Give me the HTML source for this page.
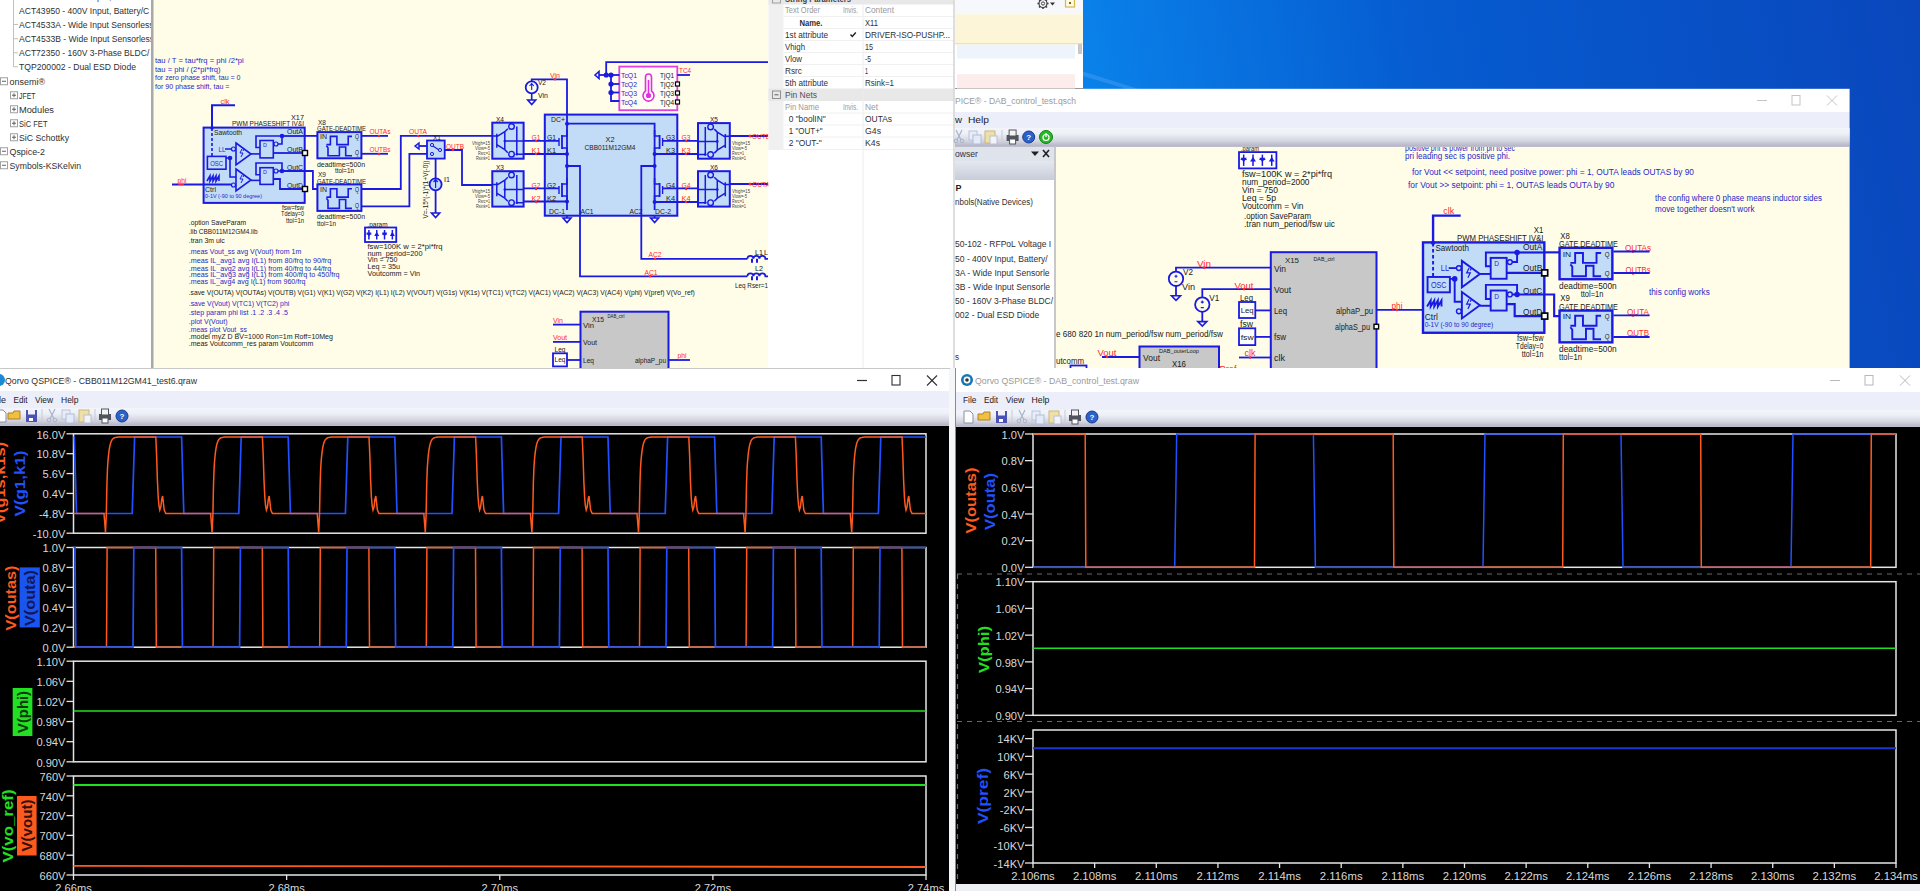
<!DOCTYPE html>
<html><head><meta charset="utf-8"><style>
html,body{margin:0;padding:0;background:#000;overflow:hidden;width:1920px;height:891px}
svg{display:block;font-family:"Liberation Sans", sans-serif}
</style></head><body>
<svg width="1920" height="891" viewBox="0 0 1920 891">
<defs>
<linearGradient id="desk" gradientUnits="userSpaceOnUse" x1="1083" y1="90" x2="1920" y2="-60">
<stop offset="0" stop-color="#0a82ea"/><stop offset="0.4" stop-color="#065cd0"/><stop offset="1" stop-color="#0a46bc"/></linearGradient>
<linearGradient id="tb" x1="0" y1="0" x2="0" y2="1">
<stop offset="0" stop-color="#f3f5fb"/><stop offset="0.3" stop-color="#eef0f8"/><stop offset="0.7" stop-color="#d2d3de"/><stop offset="0.92" stop-color="#b8b8ca"/><stop offset="1" stop-color="#c0c0cc"/></linearGradient>
<linearGradient id="mb" x1="0" y1="0" x2="0" y2="1">
<stop offset="0" stop-color="#eceef9"/><stop offset="1" stop-color="#eceef9"/></linearGradient>
<linearGradient id="brh" x1="0" y1="0" x2="0" y2="1">
<stop offset="0" stop-color="#e4e8f0"/><stop offset="1" stop-color="#c8ccd8"/></linearGradient>
</defs>
<rect x="0" y="0" width="1920" height="891" fill="#000"/>
<rect x="1083" y="0" width="837" height="370" fill="url(#desk)"/>
<path d="M1083,71.5 L1138,88.8 L1126,88.8 L1083,76 z" fill="#3c98ec" opacity="0.6"/>
<rect x="0" y="0" width="955" height="369" fill="#ffffff"/>
<rect x="153" y="0" width="615" height="368" fill="#fffde8"/>
<rect x="151" y="0" width="2.5" height="369" fill="#a8a8a8"/>
<line x1="0" y1="368.5" x2="955" y2="368.5" stroke="#b0b0b0" stroke-width="1"/>
<line x1="13.5" y1="0" x2="13.5" y2="67" stroke="#c0c0c0" stroke-width="1"/>
<line x1="14" y1="24.5" x2="18" y2="24.5" stroke="#c0c0c0" stroke-width="1"/>
<line x1="14" y1="38.75" x2="18" y2="38.75" stroke="#c0c0c0" stroke-width="1"/>
<line x1="14" y1="52.75" x2="18" y2="52.75" stroke="#c0c0c0" stroke-width="1"/>
<line x1="14" y1="66.75" x2="18" y2="66.75" stroke="#c0c0c0" stroke-width="1"/>
<clipPath id="treeclip"><rect x="0" y="0" width="151" height="368"/></clipPath><g clip-path="url(#treeclip)">
<text x="19" y="-0.2" font-size="9.2" fill="#303030" textLength="163.6" lengthAdjust="spacingAndGlyphs">ACT43740 - 160V Input, 3-Phase Charging</text>
<text x="19" y="13.8" font-size="9.2" fill="#303030" textLength="130.3" lengthAdjust="spacingAndGlyphs">ACT43950 - 400V Input, Battery/C</text>
<text x="19" y="27.8" font-size="9.2" fill="#303030" textLength="134.6" lengthAdjust="spacingAndGlyphs">ACT4533A - Wide Input Sensorless</text>
<text x="19" y="42.1" font-size="9.2" fill="#303030" textLength="135.1" lengthAdjust="spacingAndGlyphs">ACT4533B - Wide Input Sensorless</text>
<text x="19" y="56.1" font-size="9.2" fill="#303030" textLength="130.3" lengthAdjust="spacingAndGlyphs">ACT72350 - 160V 3-Phase BLDC/</text>
<text x="19" y="70.1" font-size="9.2" fill="#303030" textLength="117.0" lengthAdjust="spacingAndGlyphs">TQP200002 - Dual ESD Diode</text>
<text x="9.5" y="84.6" font-size="9.2" fill="#303030" textLength="35.5" lengthAdjust="spacingAndGlyphs">onsemi®</text>
<text x="19" y="98.6" font-size="9.2" fill="#303030" textLength="16.5" lengthAdjust="spacingAndGlyphs">JFET</text>
<text x="19" y="112.6" font-size="9.2" fill="#303030" textLength="35.0" lengthAdjust="spacingAndGlyphs">Modules</text>
<text x="19" y="126.6" font-size="9.2" fill="#303030" textLength="28.5" lengthAdjust="spacingAndGlyphs">SiC FET</text>
<text x="19" y="140.6" font-size="9.2" fill="#303030" textLength="50.0" lengthAdjust="spacingAndGlyphs">SiC Schottky</text>
<text x="9.5" y="154.6" font-size="9.2" fill="#303030" textLength="35.5" lengthAdjust="spacingAndGlyphs">Qspice-2</text>
<text x="9.5" y="168.6" font-size="9.2" fill="#303030" textLength="71.5" lengthAdjust="spacingAndGlyphs">Symbols-KSKelvin</text>
</g>
<rect x="0.5" y="77.75" width="7" height="7" fill="none" stroke="#a0a0a0" stroke-width="1"/>
<line x1="2" y1="81.25" x2="6" y2="81.25" stroke="#606060" stroke-width="1"/>
<rect x="0.5" y="147.75" width="7" height="7" fill="none" stroke="#a0a0a0" stroke-width="1"/>
<line x1="2" y1="151.25" x2="6" y2="151.25" stroke="#606060" stroke-width="1"/>
<rect x="0.5" y="161.75" width="7" height="7" fill="none" stroke="#a0a0a0" stroke-width="1"/>
<line x1="2" y1="165.25" x2="6" y2="165.25" stroke="#606060" stroke-width="1"/>
<rect x="10.5" y="91.75" width="7" height="7" fill="none" stroke="#a0a0a0" stroke-width="1"/>
<line x1="12" y1="95.25" x2="16" y2="95.25" stroke="#606060" stroke-width="1"/>
<line x1="14" y1="93.25" x2="14" y2="97.25" stroke="#606060" stroke-width="1"/>
<rect x="10.5" y="105.75" width="7" height="7" fill="none" stroke="#a0a0a0" stroke-width="1"/>
<line x1="12" y1="109.25" x2="16" y2="109.25" stroke="#606060" stroke-width="1"/>
<line x1="14" y1="107.25" x2="14" y2="111.25" stroke="#606060" stroke-width="1"/>
<rect x="10.5" y="119.75" width="7" height="7" fill="none" stroke="#a0a0a0" stroke-width="1"/>
<line x1="12" y1="123.25" x2="16" y2="123.25" stroke="#606060" stroke-width="1"/>
<line x1="14" y1="121.25" x2="14" y2="125.25" stroke="#606060" stroke-width="1"/>
<rect x="10.5" y="133.75" width="7" height="7" fill="none" stroke="#a0a0a0" stroke-width="1"/>
<line x1="12" y1="137.25" x2="16" y2="137.25" stroke="#606060" stroke-width="1"/>
<line x1="14" y1="135.25" x2="14" y2="139.25" stroke="#606060" stroke-width="1"/>
<text x="155" y="62.9" font-size="8" fill="#2828c8" textLength="88.8" lengthAdjust="spacingAndGlyphs">tau / T = tau*frq = phi /2*pi</text>
<text x="155" y="71.6" font-size="8" fill="#2828c8" textLength="65.5" lengthAdjust="spacingAndGlyphs">tau = phi / (2*pi*frq)</text>
<text x="155" y="80.4" font-size="8" fill="#2828c8" textLength="85.5" lengthAdjust="spacingAndGlyphs">for zero phase shift, tau = 0</text>
<text x="155" y="89.1" font-size="8" fill="#2828c8" textLength="74.5" lengthAdjust="spacingAndGlyphs">for 90 phase shift, tau =</text>
<text x="188.75" y="225.4" font-size="8" fill="#202020" textLength="57.5" lengthAdjust="spacingAndGlyphs">.option SaveParam</text>
<text x="188.75" y="234.1" font-size="8" fill="#202020" textLength="68.8" lengthAdjust="spacingAndGlyphs">.lib CBB011M12GM4.lib</text>
<text x="188.75" y="242.9" font-size="8" fill="#202020" textLength="36.0" lengthAdjust="spacingAndGlyphs">.tran 3m uic</text>
<text x="188.75" y="253.6" font-size="8" fill="#2828c8" textLength="112.5" lengthAdjust="spacingAndGlyphs">.meas Vout_ss avg V(Vout) from 1m</text>
<text x="188.75" y="262.9" font-size="8" fill="#2828c8" textLength="142.5" lengthAdjust="spacingAndGlyphs">.meas IL_avg1 avg I(L1) from 80/frq to 90/frq</text>
<text x="188.75" y="270.9" font-size="8" fill="#2828c8" textLength="142.5" lengthAdjust="spacingAndGlyphs">.meas IL_avg2 avg I(L1) from 40/frq to 44/frq</text>
<text x="188.75" y="277.4" font-size="8" fill="#2828c8" textLength="150.8" lengthAdjust="spacingAndGlyphs">.meas IL_avg3 avg I(L1) from 400/frq to 450/frq</text>
<text x="188.75" y="284.1" font-size="8" fill="#2828c8" textLength="116.8" lengthAdjust="spacingAndGlyphs">.meas IL_avg4 avg I(L1) from 960/frq</text>
<text x="188.75" y="295.4" font-size="8" fill="#202020" textLength="506.0" lengthAdjust="spacingAndGlyphs">.save V(OUTA) V(OUTAs) V(OUTB) V(G1) V(K1) V(G2) V(K2) I(L1) I(L2) V(VOUT) V(G1s) V(K1s) V(TC1) V(TC2) V(AC1) V(AC2) V(AC3) V(AC4) V(phi) V(pref) V(Vo_ref)</text>
<text x="188.75" y="306.1" font-size="8" fill="#2828c8" textLength="100.5" lengthAdjust="spacingAndGlyphs">.save V(Vout) V(TC1) V(TC2) phi</text>
<text x="188.75" y="314.9" font-size="8" fill="#2828c8" textLength="99.2" lengthAdjust="spacingAndGlyphs">.step param phi list .1 .2 .3 .4 .5</text>
<text x="188.75" y="323.6" font-size="8" fill="#2828c8" textLength="38.8" lengthAdjust="spacingAndGlyphs">.plot V(Vout)</text>
<text x="188.75" y="332.4" font-size="8" fill="#2828c8" textLength="58.2" lengthAdjust="spacingAndGlyphs">.meas plot Vout_ss</text>
<text x="188.75" y="339.1" font-size="8" fill="#202020" textLength="144.2" lengthAdjust="spacingAndGlyphs">.model myZ D BV=1000 Ron=1m Roff=10Meg</text>
<text x="188.75" y="345.9" font-size="8" fill="#202020" textLength="124.5" lengthAdjust="spacingAndGlyphs">.meas Voutcomm_res param Voutcomm</text>
<text x="367.5" y="227.4" font-size="8" fill="#202020" textLength="20.0" lengthAdjust="spacingAndGlyphs">.param</text>
<rect x="365" y="227.5" width="31.25" height="14.5" fill="#fff" stroke="#1a1ae0" stroke-width="1.8"/>
<line x1="368.90625" y1="230.0" x2="368.90625" y2="239.5" stroke="#1a1ae0" stroke-width="1.5"/>
<path d="M366.40625,232.43 L371.40625,232.43 L368.90625,236.49 z" fill="#1a1ae0"/>
<line x1="366.40625" y1="234.025" x2="371.40625" y2="234.025" stroke="#1a1ae0" stroke-width="1.3"/>
<line x1="376.71875" y1="230.0" x2="376.71875" y2="239.5" stroke="#1a1ae0" stroke-width="1.5"/>
<path d="M374.21875,235.91 L379.21875,235.91 L376.71875,231.85 z" fill="#1a1ae0"/>
<line x1="384.53125" y1="230.0" x2="384.53125" y2="239.5" stroke="#1a1ae0" stroke-width="1.5"/>
<path d="M382.03125,232.43 L387.03125,232.43 L384.53125,236.49 z" fill="#1a1ae0"/>
<line x1="382.03125" y1="234.025" x2="387.03125" y2="234.025" stroke="#1a1ae0" stroke-width="1.3"/>
<line x1="392.34375" y1="230.0" x2="392.34375" y2="239.5" stroke="#1a1ae0" stroke-width="1.5"/>
<path d="M389.84375,235.91 L394.84375,235.91 L392.34375,231.85 z" fill="#1a1ae0"/>
<text x="367.5" y="249.1" font-size="8" fill="#202020" textLength="75.0" lengthAdjust="spacingAndGlyphs">fsw=100K  w = 2*pi*frq</text>
<text x="367.5" y="255.9" font-size="8" fill="#202020" textLength="55.0" lengthAdjust="spacingAndGlyphs">num_period=200</text>
<text x="367.5" y="262.4" font-size="8" fill="#202020" textLength="30.0" lengthAdjust="spacingAndGlyphs">Vin = 750</text>
<text x="367.5" y="269.1" font-size="8" fill="#202020" textLength="32.5" lengthAdjust="spacingAndGlyphs">Leq = 35u</text>
<text x="367.5" y="275.9" font-size="8" fill="#202020" textLength="52.5" lengthAdjust="spacingAndGlyphs">Voutcomm = Vin</text>
<rect x="203.6" y="127.6" width="101.1" height="75.30000000000001" fill="#c2dcf8" stroke="#1a1ae0" stroke-width="2"/>
<polyline points="212.0,127.6 212.0,105.3 235.0,105.3" fill="none" stroke="#1a1ae0" stroke-width="2"/>
<line x1="212" y1="128" x2="212" y2="156" stroke="#1a1ae0" stroke-width="1.6" stroke-dasharray="3,2"/>
<circle cx="212" cy="128" r="1.8" fill="#1a1ae0"/>
<rect x="207.4" y="156.4" width="18.6" height="12.8" fill="none" stroke="#1a1ae0" stroke-width="1.6"/>
<text x="216.7" y="165.5" font-size="7" fill="#2828c8" text-anchor="middle" textLength="13.0" lengthAdjust="spacingAndGlyphs">OSC</text>
<path d="M207,181 l3,-5 v5 l3,-5 v5 l3,-5 v5 l3,-5 v5" fill="none" stroke="#1a1ae0" stroke-width="1.6"/>
<circle cx="230" cy="158" r="2.3" fill="#1a1ae0"/>
<polyline points="226.0,158.0 230.0,158.0 230.0,177.0 236.0,177.0" fill="none" stroke="#1a1ae0" stroke-width="1.6"/>
<path d="M236,143 L251,154 L236,165 z" fill="#c2dcf8" stroke="#1a1ae0" stroke-width="1.6"/>
<path d="M242,149 l-2,4 h3 l-2,4 M244,149 l-1,2" fill="none" stroke="#1a1ae0" stroke-width="1"/>
<path d="M236,169 L251,180 L236,191 z" fill="#c2dcf8" stroke="#1a1ae0" stroke-width="1.6"/>
<path d="M242,175 l-2,4 h3 l-2,4 M244,175 l-1,2" fill="none" stroke="#1a1ae0" stroke-width="1"/>
<circle cx="233.5" cy="149" r="2" fill="#c2dcf8" stroke="#1a1ae0" stroke-width="1.2"/>
<circle cx="233.5" cy="185" r="2" fill="#c2dcf8" stroke="#1a1ae0" stroke-width="1.2"/>
<line x1="225" y1="149" x2="231.5" y2="149" stroke="#1a1ae0" stroke-width="1.5"/>
<text x="222" y="151.5" font-size="7" fill="#2828c8" text-anchor="middle" textLength="7.0" lengthAdjust="spacingAndGlyphs">LL</text>
<text x="225" y="103.7" font-size="7.5" fill="#ff2a2a" text-anchor="middle" textLength="9.0" lengthAdjust="spacingAndGlyphs">clk</text>
<rect x="260" y="140.5" width="13.3" height="17.400000000000006" fill="#c2dcf8" stroke="#1a1ae0" stroke-width="1.6"/>
<text x="263" y="147.2" font-size="6" fill="#2828c8" textLength="4.0" lengthAdjust="spacingAndGlyphs">D</text>
<circle cx="276" cy="144" r="2" fill="#c2dcf8" stroke="#1a1ae0" stroke-width="1.2"/>
<polyline points="260.0,147.5 256.0,147.5 256.0,136.0 282.0,136.0 282.0,144.0 278.0,144.0" fill="none" stroke="#1a1ae0" stroke-width="1.6"/>
<circle cx="282" cy="136" r="2.3" fill="#1a1ae0"/>
<line x1="251" y1="153.9" x2="260" y2="153.9" stroke="#1a1ae0" stroke-width="1.6"/>
<rect x="260" y="167.7" width="13.3" height="16.700000000000017" fill="#c2dcf8" stroke="#1a1ae0" stroke-width="1.6"/>
<text x="263" y="174.4" font-size="6" fill="#2828c8" textLength="4.0" lengthAdjust="spacingAndGlyphs">D</text>
<circle cx="276" cy="171" r="2" fill="#c2dcf8" stroke="#1a1ae0" stroke-width="1.2"/>
<polyline points="260.0,174.7 256.0,174.7 256.0,163.0 282.0,163.0 282.0,171.0 278.0,171.0" fill="none" stroke="#1a1ae0" stroke-width="1.6"/>
<circle cx="282" cy="171" r="2.3" fill="#1a1ae0"/>
<line x1="251" y1="180.4" x2="260" y2="180.4" stroke="#1a1ae0" stroke-width="1.6"/>
<line x1="282" y1="136" x2="304.7" y2="136" stroke="#1a1ae0" stroke-width="1.8"/>
<polyline points="273.3,153.0 304.7,153.0" fill="none" stroke="#1a1ae0" stroke-width="1.8"/>
<polyline points="282.0,171.0 312.9,171.0 312.9,189.0 317.4,189.0" fill="none" stroke="#1a1ae0" stroke-width="1.8"/>
<polyline points="273.3,179.0 280.0,179.0 280.0,189.0 304.7,189.0" fill="none" stroke="#1a1ae0" stroke-width="1.8"/>
<rect x="302.5" y="150.5" width="5" height="5" fill="#fff" stroke="#000" stroke-width="1.4"/>
<rect x="302.5" y="186.5" width="5" height="5" fill="#fff" stroke="#000" stroke-width="1.4"/>
<text x="304" y="119.7" font-size="7.5" fill="#202020" text-anchor="end" textLength="13.0" lengthAdjust="spacingAndGlyphs">X17</text>
<text x="304" y="126.2" font-size="7.5" fill="#202020" text-anchor="end" textLength="72.0" lengthAdjust="spacingAndGlyphs">PWM PHASESHIFT IV&amp;I</text>
<text x="214" y="134.7" font-size="7.5" fill="#202020" textLength="28.0" lengthAdjust="spacingAndGlyphs">Sawtooth</text>
<text x="303" y="134.2" font-size="7.5" fill="#202020" text-anchor="end" textLength="16.0" lengthAdjust="spacingAndGlyphs">OutA</text>
<text x="303" y="151.7" font-size="7.5" fill="#202020" text-anchor="end" textLength="16.0" lengthAdjust="spacingAndGlyphs">OutB</text>
<text x="303" y="170.2" font-size="7.5" fill="#202020" text-anchor="end" textLength="16.0" lengthAdjust="spacingAndGlyphs">OutC</text>
<text x="303" y="187.7" font-size="7.5" fill="#202020" text-anchor="end" textLength="16.0" lengthAdjust="spacingAndGlyphs">OutD</text>
<text x="205" y="192.2" font-size="7.5" fill="#202020" textLength="11.0" lengthAdjust="spacingAndGlyphs">Ctrl</text>
<text x="205" y="198.2" font-size="6" fill="#2828c8" textLength="57.0" lengthAdjust="spacingAndGlyphs">0-1V (-90 to 90 degree)</text>
<text x="304" y="209.7" font-size="7.5" fill="#202020" text-anchor="end" textLength="22.0" lengthAdjust="spacingAndGlyphs">fsw=fsw</text>
<text x="304" y="216.2" font-size="7.5" fill="#202020" text-anchor="end" textLength="23.0" lengthAdjust="spacingAndGlyphs">Tdelay=0</text>
<text x="304" y="222.7" font-size="7.5" fill="#202020" text-anchor="end" textLength="18.0" lengthAdjust="spacingAndGlyphs">ttol=1n</text>
<rect x="317.4" y="132.1" width="44.0" height="26.200000000000017" fill="#c2dcf8" stroke="#1a1ae0" stroke-width="2"/>
<g transform="translate(317.4 132.1) scale(1.0 0.9961977186311793) translate(-317.4 -132.1)"><path d="M326.4,144.7 h4 v-8.3 h6.5 v8.3 h11.3 v-8.3 h3.8" fill="none" stroke="#1a1ae0" stroke-width="1.6"/><path d="M326.4,145.9 l1.6,2 v8 h11.4 v-8.8 h6.3 v8.8 h6.3" fill="none" stroke="#1a1ae0" stroke-width="1.6"/></g>
<rect x="317.4" y="184.4" width="44.0" height="26.5" fill="#c2dcf8" stroke="#1a1ae0" stroke-width="2"/>
<g transform="translate(317.4 184.4) scale(1.0 1.0076045627376427) translate(-317.4 -184.4)"><path d="M326.4,197.0 h4 v-8.3 h6.5 v8.3 h11.3 v-8.3 h3.8" fill="none" stroke="#1a1ae0" stroke-width="1.6"/><path d="M326.4,198.20000000000002 l1.6,2 v8 h11.4 v-8.8 h6.3 v8.8 h6.3" fill="none" stroke="#1a1ae0" stroke-width="1.6"/></g>
<text x="318" y="124.7" font-size="7.5" fill="#202020" textLength="8.0" lengthAdjust="spacingAndGlyphs">X8</text>
<text x="318" y="176.7" font-size="7.5" fill="#202020" textLength="8.0" lengthAdjust="spacingAndGlyphs">X9</text>
<text x="317" y="131.2" font-size="7.5" fill="#202020" textLength="49.0" lengthAdjust="spacingAndGlyphs">GATE-DEADTIME</text>
<text x="317" y="183.7" font-size="7.5" fill="#202020" textLength="49.0" lengthAdjust="spacingAndGlyphs">GATE-DEADTIME</text>
<text x="320" y="139.4" font-size="6.5" fill="#202020" textLength="7.0" lengthAdjust="spacingAndGlyphs">IN</text>
<text x="359" y="139.4" font-size="6.5" fill="#202020" text-anchor="end" textLength="4.0" lengthAdjust="spacingAndGlyphs">Q</text>
<text x="359" y="155.4" font-size="6.5" fill="#202020" text-anchor="end" textLength="4.0" lengthAdjust="spacingAndGlyphs">Q</text>
<text x="320" y="191.7" font-size="6.5" fill="#202020" textLength="7.0" lengthAdjust="spacingAndGlyphs">IN</text>
<text x="359" y="191.7" font-size="6.5" fill="#202020" text-anchor="end" textLength="4.0" lengthAdjust="spacingAndGlyphs">Q</text>
<text x="359" y="207.7" font-size="6.5" fill="#202020" text-anchor="end" textLength="4.0" lengthAdjust="spacingAndGlyphs">Q</text>
<text x="317" y="166.7" font-size="7.5" fill="#202020" textLength="48.0" lengthAdjust="spacingAndGlyphs">deadtime=500n</text>
<text x="335" y="173.2" font-size="7.5" fill="#202020" textLength="19.0" lengthAdjust="spacingAndGlyphs">ttol=1n</text>
<text x="317" y="219.2" font-size="7.5" fill="#202020" textLength="48.0" lengthAdjust="spacingAndGlyphs">deadtime=500n</text>
<text x="317" y="225.7" font-size="7.5" fill="#202020" textLength="19.0" lengthAdjust="spacingAndGlyphs">ttol=1n</text>
<line x1="304.7" y1="135.9" x2="317.4" y2="135.9" stroke="#1a1ae0" stroke-width="1.8"/>
<line x1="172" y1="184.4" x2="231.5" y2="184.4" stroke="#1a1ae0" stroke-width="2"/>
<line x1="179" y1="184.4" x2="184" y2="184.4" stroke="#ff2a2a" stroke-width="1"/>
<text x="182" y="183.2" font-size="7.5" fill="#ff2a2a" text-anchor="middle" textLength="9.0" lengthAdjust="spacingAndGlyphs">phi</text>
<line x1="361.4" y1="135.9" x2="388" y2="135.9" stroke="#1a1ae0" stroke-width="1.8"/>
<line x1="361.4" y1="153.8" x2="388" y2="153.8" stroke="#1a1ae0" stroke-width="1.8"/>
<text x="380" y="134.2" font-size="7.5" fill="#ff2a2a" text-anchor="middle" textLength="21.0" lengthAdjust="spacingAndGlyphs">OUTAs</text>
<text x="380" y="152.2" font-size="7.5" fill="#ff2a2a" text-anchor="middle" textLength="21.0" lengthAdjust="spacingAndGlyphs">OUTBs</text>
<circle cx="379" cy="136" r="1.2" fill="#ff2a2a"/>
<circle cx="379" cy="154" r="1.2" fill="#ff2a2a"/>
<polyline points="361.4,189.0 400.8,189.0 400.8,135.9 492.3,135.9" fill="none" stroke="#1a1ae0" stroke-width="1.8"/>
<polyline points="361.4,206.4 409.4,206.4 409.4,153.8 427.0,153.8" fill="none" stroke="#1a1ae0" stroke-width="1.8"/>
<text x="418" y="134.2" font-size="7.5" fill="#ff2a2a" text-anchor="middle" textLength="18.0" lengthAdjust="spacingAndGlyphs">OUTA</text>
<circle cx="418" cy="136" r="1.2" fill="#ff2a2a"/>
<rect x="427" y="140.5" width="17.7" height="18.1" fill="#c2dcf8" stroke="#1a1ae0" stroke-width="1.8"/>
<circle cx="432" cy="145" r="1.6" fill="none" stroke="#1a1ae0" stroke-width="1"/>
<circle cx="432" cy="154" r="1.6" fill="none" stroke="#1a1ae0" stroke-width="1"/>
<circle cx="440" cy="150" r="1.6" fill="none" stroke="#1a1ae0" stroke-width="1"/>
<line x1="433" y1="146" x2="439" y2="150" stroke="#1a1ae0" stroke-width="1.2"/>
<text x="437" y="139.5" font-size="7" fill="#202020" text-anchor="middle" textLength="8.0" lengthAdjust="spacingAndGlyphs">X1</text>
<path d="M415,146 l4,-3 v6 z" fill="#c2dcf8" stroke="#1a1ae0" stroke-width="1.4"/>
<line x1="419" y1="146" x2="427" y2="146" stroke="#1a1ae0" stroke-width="1.8"/>
<polyline points="444.7,150.0 462.0,150.0 462.0,185.0 492.3,185.0" fill="none" stroke="#1a1ae0" stroke-width="1.8"/>
<text x="455" y="148.7" font-size="7.5" fill="#ff2a2a" text-anchor="middle" textLength="18.0" lengthAdjust="spacingAndGlyphs">OUTB</text>
<circle cx="453" cy="150" r="1.2" fill="#ff2a2a"/>
<line x1="435.6" y1="158.6" x2="435.6" y2="213" stroke="#1a1ae0" stroke-width="1.8"/>
<circle cx="435.6" cy="184.4" r="6" fill="#c2dcf8" stroke="#1a1ae0" stroke-width="1.8"/>
<path d="M435.6,180 v8 M433.5,182 l2.1,-2.5 l2.1,2.5" fill="none" stroke="#1a1ae0" stroke-width="1.2"/>
<path d="M431.5,213 h8.2 l-4.1,4.5 z" fill="none" stroke="#1a1ae0" stroke-width="1.6"/>
<text x="444" y="181.5" font-size="7" fill="#202020" textLength="6.0" lengthAdjust="spacingAndGlyphs">I1</text>
<text x="425" y="192.0" font-size="7" fill="#202020" text-anchor="middle" transform="rotate(-90 425 189.5)" textLength="58.0" lengthAdjust="spacingAndGlyphs">V=-15*(-1)*(1+V(-0))</text>
<rect x="492.3" y="122.7" width="31.30000000000001" height="35.999999999999986" fill="#c2dcf8" stroke="#1a1ae0" stroke-width="2"/>
<g>
<path d="M492.3,135.9 h4.5 M496.8,133.7 v14 M496.8,136.7 l8,-5 l3,-3 M496.8,144.7 l8,5 l3,3 M504.8,131.7 v18 M504.8,141.0 h18.8 M516.8,126.5 v27.7 M516.8,154.2 h6.8" fill="none" stroke="#1a1ae0" stroke-width="1.5"/>
<circle cx="511.5" cy="126.5" r="2.8" fill="#c2dcf8" stroke="#1a1ae0" stroke-width="1.4"/>
<circle cx="511.5" cy="154.2" r="2.8" fill="#c2dcf8" stroke="#1a1ae0" stroke-width="1.4"/>
<circle cx="504.8" cy="141.0" r="1.3" fill="#1a1ae0"/>
<circle cx="516.8" cy="154.2" r="1.3" fill="#1a1ae0"/>
</g>
<rect x="492.3" y="171.2" width="31.30000000000001" height="35.400000000000006" fill="#c2dcf8" stroke="#1a1ae0" stroke-width="2"/>
<g>
<path d="M492.3,184.39999999999998 h4.5 M496.8,182.2 v14 M496.8,185.2 l8,-5 l3,-3 M496.8,193.2 l8,5 l3,3 M504.8,180.2 v18 M504.8,189.5 h18.8 M516.8,175.0 v27.7 M516.8,202.7 h6.8" fill="none" stroke="#1a1ae0" stroke-width="1.5"/>
<circle cx="511.5" cy="175.0" r="2.8" fill="#c2dcf8" stroke="#1a1ae0" stroke-width="1.4"/>
<circle cx="511.5" cy="202.7" r="2.8" fill="#c2dcf8" stroke="#1a1ae0" stroke-width="1.4"/>
<circle cx="504.8" cy="189.5" r="1.3" fill="#1a1ae0"/>
<circle cx="516.8" cy="202.7" r="1.3" fill="#1a1ae0"/>
</g>
<rect x="698" y="123.1" width="31.799999999999955" height="35.599999999999994" fill="#c2dcf8" stroke="#1a1ae0" stroke-width="2"/>
<g transform="translate(1427.8 0) scale(-1 1)">
<path d="M698,136.29999999999998 h4.5 M702.5,134.1 v14 M702.5,137.1 l8,-5 l3,-3 M702.5,145.1 l8,5 l3,3 M710.5,132.1 v18 M710.5,141.4 h18.8 M722.5,126.89999999999999 v27.7 M722.5,154.6 h6.8" fill="none" stroke="#1a1ae0" stroke-width="1.5"/>
<circle cx="717.2" cy="126.89999999999999" r="2.8" fill="#c2dcf8" stroke="#1a1ae0" stroke-width="1.4"/>
<circle cx="717.2" cy="154.6" r="2.8" fill="#c2dcf8" stroke="#1a1ae0" stroke-width="1.4"/>
<circle cx="710.5" cy="141.4" r="1.3" fill="#1a1ae0"/>
<circle cx="722.5" cy="154.6" r="1.3" fill="#1a1ae0"/>
</g>
<rect x="698" y="171.2" width="31.799999999999955" height="35.400000000000006" fill="#c2dcf8" stroke="#1a1ae0" stroke-width="2"/>
<g transform="translate(1427.8 0) scale(-1 1)">
<path d="M698,184.39999999999998 h4.5 M702.5,182.2 v14 M702.5,185.2 l8,-5 l3,-3 M702.5,193.2 l8,5 l3,3 M710.5,180.2 v18 M710.5,189.5 h18.8 M722.5,175.0 v27.7 M722.5,202.7 h6.8" fill="none" stroke="#1a1ae0" stroke-width="1.5"/>
<circle cx="717.2" cy="175.0" r="2.8" fill="#c2dcf8" stroke="#1a1ae0" stroke-width="1.4"/>
<circle cx="717.2" cy="202.7" r="2.8" fill="#c2dcf8" stroke="#1a1ae0" stroke-width="1.4"/>
<circle cx="710.5" cy="189.5" r="1.3" fill="#1a1ae0"/>
<circle cx="722.5" cy="202.7" r="1.3" fill="#1a1ae0"/>
</g>
<text x="496" y="121.5" font-size="7" fill="#202020" textLength="8.0" lengthAdjust="spacingAndGlyphs">X4</text>
<text x="496" y="169.5" font-size="7" fill="#202020" textLength="8.0" lengthAdjust="spacingAndGlyphs">X3</text>
<text x="714" y="121.5" font-size="7" fill="#202020" text-anchor="middle" textLength="8.0" lengthAdjust="spacingAndGlyphs">X5</text>
<text x="714" y="169.5" font-size="7" fill="#202020" text-anchor="middle" textLength="8.0" lengthAdjust="spacingAndGlyphs">X6</text>
<text x="490" y="144.5" font-size="5.5" fill="#404040" text-anchor="end" textLength="18.0" lengthAdjust="spacingAndGlyphs">Vhigh=15</text>
<text x="490" y="149.8" font-size="5.5" fill="#404040" text-anchor="end" textLength="15.0" lengthAdjust="spacingAndGlyphs">Vlow=-5</text>
<text x="490" y="155.1" font-size="5.5" fill="#404040" text-anchor="end" textLength="12.0" lengthAdjust="spacingAndGlyphs">Rsrc=1</text>
<text x="490" y="160.4" font-size="5.5" fill="#404040" text-anchor="end" textLength="14.0" lengthAdjust="spacingAndGlyphs">Rsink=1</text>
<text x="490" y="192.5" font-size="5.5" fill="#404040" text-anchor="end" textLength="18.0" lengthAdjust="spacingAndGlyphs">Vhigh=15</text>
<text x="490" y="197.8" font-size="5.5" fill="#404040" text-anchor="end" textLength="15.0" lengthAdjust="spacingAndGlyphs">Vlow=-5</text>
<text x="490" y="203.1" font-size="5.5" fill="#404040" text-anchor="end" textLength="12.0" lengthAdjust="spacingAndGlyphs">Rsrc=1</text>
<text x="490" y="208.4" font-size="5.5" fill="#404040" text-anchor="end" textLength="14.0" lengthAdjust="spacingAndGlyphs">Rsink=1</text>
<text x="732" y="144.5" font-size="5.5" fill="#404040" textLength="18.0" lengthAdjust="spacingAndGlyphs">Vhigh=15</text>
<text x="732" y="149.8" font-size="5.5" fill="#404040" textLength="15.0" lengthAdjust="spacingAndGlyphs">Vlow=-5</text>
<text x="732" y="155.1" font-size="5.5" fill="#404040" textLength="12.0" lengthAdjust="spacingAndGlyphs">Rsrc=1</text>
<text x="732" y="160.4" font-size="5.5" fill="#404040" textLength="14.0" lengthAdjust="spacingAndGlyphs">Rsink=1</text>
<text x="732" y="192.5" font-size="5.5" fill="#404040" textLength="18.0" lengthAdjust="spacingAndGlyphs">Vhigh=15</text>
<text x="732" y="197.8" font-size="5.5" fill="#404040" textLength="15.0" lengthAdjust="spacingAndGlyphs">Vlow=-5</text>
<text x="732" y="203.1" font-size="5.5" fill="#404040" textLength="12.0" lengthAdjust="spacingAndGlyphs">Rsrc=1</text>
<text x="732" y="208.4" font-size="5.5" fill="#404040" textLength="14.0" lengthAdjust="spacingAndGlyphs">Rsink=1</text>
<rect x="544.8" y="114.6" width="132.5" height="101.1" fill="#c2dcf8" stroke="#1a1ae0" stroke-width="2"/>
<polyline points="531.7,81.0 531.7,79.3 567.0,79.3 567.0,210.0" fill="none" stroke="#1a1ae0" stroke-width="1.8"/>
<polyline points="567.0,123.7 654.6,123.7 654.6,210.0" fill="none" stroke="#1a1ae0" stroke-width="1.8"/>
<circle cx="567" cy="123.7" r="2" fill="#1a1ae0"/>
<circle cx="567" cy="154" r="2" fill="#1a1ae0"/>
<circle cx="567" cy="166" r="2" fill="#1a1ae0"/>
<circle cx="567" cy="201.5" r="2" fill="#1a1ae0"/>
<circle cx="654.6" cy="154" r="2" fill="#1a1ae0"/>
<circle cx="654.6" cy="166" r="2" fill="#1a1ae0"/>
<circle cx="654.6" cy="202" r="2" fill="#1a1ae0"/>
<polyline points="567.0,166.0 580.0,166.0 580.0,276.3 747.4,276.3" fill="none" stroke="#1a1ae0" stroke-width="1.8"/>
<polyline points="654.6,166.0 641.3,166.0 641.3,258.8 747.4,258.8" fill="none" stroke="#1a1ae0" stroke-width="1.8"/>
<line x1="562" y1="135" x2="562" y2="149" stroke="#1a1ae0" stroke-width="1.8"/>
<line x1="559" y1="138" x2="559" y2="146" stroke="#1a1ae0" stroke-width="1.4"/>
<polyline points="562.0,136.0 567.0,136.0 567.0,130.0" fill="none" stroke="#1a1ae0" stroke-width="1.6"/>
<polyline points="562.0,148.0 567.0,148.0 567.0,154.0" fill="none" stroke="#1a1ae0" stroke-width="1.6"/>
<line x1="562" y1="183" x2="562" y2="197" stroke="#1a1ae0" stroke-width="1.8"/>
<line x1="559" y1="186" x2="559" y2="194" stroke="#1a1ae0" stroke-width="1.4"/>
<polyline points="562.0,184.0 567.0,184.0 567.0,178.0" fill="none" stroke="#1a1ae0" stroke-width="1.6"/>
<polyline points="562.0,196.0 567.0,196.0 567.0,202.0" fill="none" stroke="#1a1ae0" stroke-width="1.6"/>
<line x1="659.6" y1="135" x2="659.6" y2="149" stroke="#1a1ae0" stroke-width="1.8"/>
<line x1="662.6" y1="138" x2="662.6" y2="146" stroke="#1a1ae0" stroke-width="1.4"/>
<polyline points="659.6,136.0 654.6,136.0 654.6,130.0" fill="none" stroke="#1a1ae0" stroke-width="1.6"/>
<polyline points="659.6,148.0 654.6,148.0 654.6,154.0" fill="none" stroke="#1a1ae0" stroke-width="1.6"/>
<line x1="659.6" y1="183" x2="659.6" y2="197" stroke="#1a1ae0" stroke-width="1.8"/>
<line x1="662.6" y1="186" x2="662.6" y2="194" stroke="#1a1ae0" stroke-width="1.4"/>
<polyline points="659.6,184.0 654.6,184.0 654.6,178.0" fill="none" stroke="#1a1ae0" stroke-width="1.6"/>
<polyline points="659.6,196.0 654.6,196.0 654.6,202.0" fill="none" stroke="#1a1ae0" stroke-width="1.6"/>
<line x1="523.6" y1="140.9" x2="559" y2="140.9" stroke="#1a1ae0" stroke-width="1.8"/>
<line x1="523.6" y1="188.4" x2="559" y2="188.4" stroke="#1a1ae0" stroke-width="1.8"/>
<line x1="523.6" y1="154" x2="567" y2="154" stroke="#1a1ae0" stroke-width="1.8"/>
<line x1="523.6" y1="201.5" x2="567" y2="201.5" stroke="#1a1ae0" stroke-width="1.8"/>
<line x1="662" y1="140.9" x2="698" y2="140.9" stroke="#1a1ae0" stroke-width="1.8"/>
<line x1="662" y1="188.4" x2="698" y2="188.4" stroke="#1a1ae0" stroke-width="1.8"/>
<line x1="654.6" y1="154" x2="698" y2="154" stroke="#1a1ae0" stroke-width="1.8"/>
<line x1="654.6" y1="202" x2="698" y2="202" stroke="#1a1ae0" stroke-width="1.8"/>
<text x="536" y="139.5" font-size="7" fill="#ff2a2a" text-anchor="middle" textLength="9.0" lengthAdjust="spacingAndGlyphs">G1</text>
<circle cx="536" cy="141" r="1.2" fill="#ff2a2a"/>
<text x="536" y="152.5" font-size="7" fill="#ff2a2a" text-anchor="middle" textLength="9.0" lengthAdjust="spacingAndGlyphs">K1</text>
<circle cx="536" cy="154" r="1.2" fill="#ff2a2a"/>
<text x="536" y="187.5" font-size="7" fill="#ff2a2a" text-anchor="middle" textLength="9.0" lengthAdjust="spacingAndGlyphs">G2</text>
<circle cx="536" cy="189" r="1.2" fill="#ff2a2a"/>
<text x="536" y="200.5" font-size="7" fill="#ff2a2a" text-anchor="middle" textLength="9.0" lengthAdjust="spacingAndGlyphs">K2</text>
<circle cx="536" cy="202" r="1.2" fill="#ff2a2a"/>
<text x="686" y="139.5" font-size="7" fill="#ff2a2a" text-anchor="middle" textLength="9.0" lengthAdjust="spacingAndGlyphs">G3</text>
<circle cx="686" cy="141" r="1.2" fill="#ff2a2a"/>
<text x="686" y="152.5" font-size="7" fill="#ff2a2a" text-anchor="middle" textLength="9.0" lengthAdjust="spacingAndGlyphs">K3</text>
<circle cx="686" cy="154" r="1.2" fill="#ff2a2a"/>
<text x="686" y="187.5" font-size="7" fill="#ff2a2a" text-anchor="middle" textLength="9.0" lengthAdjust="spacingAndGlyphs">G4</text>
<circle cx="686" cy="189" r="1.2" fill="#ff2a2a"/>
<text x="686" y="200.5" font-size="7" fill="#ff2a2a" text-anchor="middle" textLength="9.0" lengthAdjust="spacingAndGlyphs">K4</text>
<circle cx="686" cy="202" r="1.2" fill="#ff2a2a"/>
<text x="547" y="139.5" font-size="7" fill="#202020" textLength="9.0" lengthAdjust="spacingAndGlyphs">G1</text>
<text x="547" y="152.5" font-size="7" fill="#202020" textLength="9.0" lengthAdjust="spacingAndGlyphs">K1</text>
<text x="547" y="187.5" font-size="7" fill="#202020" textLength="9.0" lengthAdjust="spacingAndGlyphs">G2</text>
<text x="547" y="200.5" font-size="7" fill="#202020" textLength="9.0" lengthAdjust="spacingAndGlyphs">K2</text>
<text x="675" y="139.5" font-size="7" fill="#202020" text-anchor="end" textLength="9.0" lengthAdjust="spacingAndGlyphs">G3</text>
<text x="675" y="152.5" font-size="7" fill="#202020" text-anchor="end" textLength="9.0" lengthAdjust="spacingAndGlyphs">K3</text>
<text x="675" y="187.5" font-size="7" fill="#202020" text-anchor="end" textLength="9.0" lengthAdjust="spacingAndGlyphs">G4</text>
<text x="675" y="200.5" font-size="7" fill="#202020" text-anchor="end" textLength="9.0" lengthAdjust="spacingAndGlyphs">K4</text>
<text x="558" y="121.5" font-size="7" fill="#202020" text-anchor="middle" textLength="14.0" lengthAdjust="spacingAndGlyphs">DC+</text>
<text x="557" y="213.5" font-size="7" fill="#202020" text-anchor="middle" textLength="16.0" lengthAdjust="spacingAndGlyphs">DC-1</text>
<text x="587" y="213.5" font-size="7" fill="#202020" text-anchor="middle" textLength="13.0" lengthAdjust="spacingAndGlyphs">AC1</text>
<text x="636" y="213.5" font-size="7" fill="#202020" text-anchor="middle" textLength="13.0" lengthAdjust="spacingAndGlyphs">AC2</text>
<text x="663" y="213.5" font-size="7" fill="#202020" text-anchor="middle" textLength="16.0" lengthAdjust="spacingAndGlyphs">DC-2</text>
<text x="610" y="141.7" font-size="7.5" fill="#202020" text-anchor="middle" textLength="9.0" lengthAdjust="spacingAndGlyphs">X2</text>
<text x="610" y="150.0" font-size="7" fill="#202020" text-anchor="middle" textLength="51.0" lengthAdjust="spacingAndGlyphs">CBB011M12GM4</text>
<line x1="567" y1="215" x2="567" y2="218" stroke="#1a1ae0" stroke-width="1.6"/>
<path d="M563,218 h8 l-4,4.5 z" fill="none" stroke="#1a1ae0" stroke-width="1.6"/>
<line x1="654.6" y1="215" x2="654.6" y2="218" stroke="#1a1ae0" stroke-width="1.6"/>
<path d="M650.6,218 h8 l-4,4.5 z" fill="none" stroke="#1a1ae0" stroke-width="1.6"/>
<line x1="729.8" y1="136" x2="768" y2="136" stroke="#1a1ae0" stroke-width="1.8"/>
<line x1="729.8" y1="184" x2="768" y2="184" stroke="#1a1ae0" stroke-width="1.8"/>
<circle cx="750" cy="136" r="1.5" fill="#ff2a2a"/>
<circle cx="750" cy="184" r="1.5" fill="#ff2a2a"/>
<text x="752" y="138.7" font-size="7.5" fill="#ff2a2a" textLength="18.0" lengthAdjust="spacingAndGlyphs">OUTB</text>
<text x="752" y="186.7" font-size="7.5" fill="#ff2a2a" textLength="18.0" lengthAdjust="spacingAndGlyphs">OUTA</text>
<circle cx="531.7" cy="87.4" r="6" fill="none" stroke="#1a1ae0" stroke-width="1.8"/>
<path d="M531.7,84 v6 M529.5,86 l2.2,-2.5 l2.2,2.5" fill="none" stroke="#1a1ae0" stroke-width="1.1"/>
<line x1="531.7" y1="93.4" x2="531.7" y2="100" stroke="#1a1ae0" stroke-width="1.6"/>
<path d="M527.7,100 h8 l-4,4.5 z" fill="none" stroke="#1a1ae0" stroke-width="1.6"/>
<text x="538" y="84.5" font-size="7" fill="#202020" textLength="8.0" lengthAdjust="spacingAndGlyphs">V2</text>
<text x="538" y="97.5" font-size="7" fill="#202020" textLength="10.0" lengthAdjust="spacingAndGlyphs">Vin</text>
<text x="555" y="77.7" font-size="7.5" fill="#ff2a2a" text-anchor="middle" textLength="10.0" lengthAdjust="spacingAndGlyphs">Vin</text>
<circle cx="555" cy="79.3" r="1.2" fill="#ff2a2a"/>
<polyline points="606.2,75.0 606.2,62.1 768.0,62.1" fill="none" stroke="#1a1ae0" stroke-width="1.8"/>
<rect x="619.3" y="66.6" width="58" height="43.6" fill="#fffcf4" stroke="#e040e0" stroke-width="1.8"/>
<path d="M595,75 l4,-3.5 v7 z" fill="none" stroke="#1a1ae0" stroke-width="1.6"/>
<polyline points="599.0,75.0 619.3,75.0" fill="none" stroke="#1a1ae0" stroke-width="1.8"/>
<polyline points="611.0,75.0 611.0,101.0 619.3,101.0" fill="none" stroke="#1a1ae0" stroke-width="1.8"/>
<line x1="611" y1="84" x2="619.3" y2="84" stroke="#1a1ae0" stroke-width="1.8"/>
<line x1="611" y1="92.5" x2="619.3" y2="92.5" stroke="#1a1ae0" stroke-width="1.8"/>
<circle cx="606.2" cy="75" r="2.6" fill="#1a1ae0"/>
<circle cx="611" cy="75" r="2.6" fill="#1a1ae0"/>
<circle cx="611" cy="84" r="2.6" fill="#1a1ae0"/>
<circle cx="611" cy="92.5" r="2.6" fill="#1a1ae0"/>
<text x="621" y="77.5" font-size="7" fill="#2828c8" textLength="16.0" lengthAdjust="spacingAndGlyphs">TcQ1</text>
<text x="621" y="86.5" font-size="7" fill="#2828c8" textLength="16.0" lengthAdjust="spacingAndGlyphs">TcQ2</text>
<text x="621" y="95.5" font-size="7" fill="#2828c8" textLength="16.0" lengthAdjust="spacingAndGlyphs">TcQ3</text>
<text x="621" y="104.5" font-size="7" fill="#2828c8" textLength="16.0" lengthAdjust="spacingAndGlyphs">TcQ4</text>
<text x="674" y="77.5" font-size="7" fill="#202020" text-anchor="end" textLength="14.0" lengthAdjust="spacingAndGlyphs">TjQ1</text>
<text x="674" y="86.5" font-size="7" fill="#202020" text-anchor="end" textLength="14.0" lengthAdjust="spacingAndGlyphs">TjQ2</text>
<text x="674" y="95.5" font-size="7" fill="#202020" text-anchor="end" textLength="14.0" lengthAdjust="spacingAndGlyphs">TjQ3</text>
<text x="674" y="104.5" font-size="7" fill="#202020" text-anchor="end" textLength="14.0" lengthAdjust="spacingAndGlyphs">TjQ4</text>
<rect x="675.5" y="82" width="4" height="4" fill="#fff" stroke="#000" stroke-width="1.2"/>
<rect x="675.5" y="91" width="4" height="4" fill="#fff" stroke="#000" stroke-width="1.2"/>
<rect x="675.5" y="100" width="4" height="4" fill="#fff" stroke="#000" stroke-width="1.2"/>
<path d="M645.5,91 v-14 a3,3 0 0 1 6,0 v14 a5.5,5.5 0 1 1 -6,0 z" fill="#fffcf4" stroke="#e030e0" stroke-width="1.6"/>
<circle cx="648.5" cy="95.5" r="2.6" fill="#e030e0"/>
<line x1="648.5" y1="80" x2="648.5" y2="94" stroke="#e030e0" stroke-width="1.6"/>
<line x1="677.3" y1="75" x2="690" y2="75" stroke="#1a1ae0" stroke-width="1.8"/>
<text x="685" y="72.7" font-size="7.5" fill="#ff2a2a" text-anchor="middle" textLength="12.0" lengthAdjust="spacingAndGlyphs">TC4</text>
<path d="M747.4,258.8 a3,3 0 0 1 6,0 a3,3 0 0 1 6,0 a3,3 0 0 1 6,0 L768,258.8" fill="none" stroke="#1a1ae0" stroke-width="1.8"/>
<line x1="752" y1="258.8" x2="752" y2="262.8" stroke="#1a1ae0" stroke-width="2"/>
<line x1="757" y1="258.8" x2="757" y2="262.8" stroke="#1a1ae0" stroke-width="2"/>
<path d="M747.4,276.3 a3,3 0 0 1 6,0 a3,3 0 0 1 6,0 a3,3 0 0 1 6,0 L768,276.3" fill="none" stroke="#1a1ae0" stroke-width="1.8"/>
<line x1="752" y1="276.3" x2="752" y2="280.3" stroke="#1a1ae0" stroke-width="2"/>
<line x1="757" y1="276.3" x2="757" y2="280.3" stroke="#1a1ae0" stroke-width="2"/>
<text x="755" y="254.5" font-size="7" fill="#202020" textLength="8.0" lengthAdjust="spacingAndGlyphs">L1</text>
<text x="764" y="254.5" font-size="7" fill="#202020" textLength="4.0" lengthAdjust="spacingAndGlyphs">L</text>
<text x="755" y="271.0" font-size="7" fill="#202020" textLength="8.0" lengthAdjust="spacingAndGlyphs">L2</text>
<text x="735" y="287.5" font-size="7" fill="#202020" textLength="33.0" lengthAdjust="spacingAndGlyphs">Leq Rser=1</text>
<text x="655" y="256.7" font-size="7.5" fill="#ff2a2a" text-anchor="middle" textLength="13.0" lengthAdjust="spacingAndGlyphs">AC2</text>
<circle cx="655" cy="258.8" r="1.2" fill="#ff2a2a"/>
<text x="651" y="275.2" font-size="7.5" fill="#ff2a2a" text-anchor="middle" textLength="13.0" lengthAdjust="spacingAndGlyphs">AC1</text>
<circle cx="650" cy="276.3" r="1.2" fill="#ff2a2a"/>
<rect x="580.5" y="311.7" width="88" height="60" fill="#c8c8c8" stroke="#1a1ae0" stroke-width="2"/>
<text x="598" y="321.7" font-size="7.5" fill="#202020" text-anchor="middle" textLength="12.0" lengthAdjust="spacingAndGlyphs">X15</text>
<text x="616" y="318.1" font-size="4.5" fill="#202020" text-anchor="middle" textLength="17.0" lengthAdjust="spacingAndGlyphs">DAB_ctrl</text>
<text x="583" y="328.0" font-size="7" fill="#202020" textLength="11.0" lengthAdjust="spacingAndGlyphs">Vin</text>
<text x="583" y="345.0" font-size="7" fill="#202020" textLength="14.0" lengthAdjust="spacingAndGlyphs">Vout</text>
<text x="583" y="363.0" font-size="7" fill="#202020" textLength="11.0" lengthAdjust="spacingAndGlyphs">Leq</text>
<text x="666" y="362.5" font-size="7" fill="#202020" text-anchor="end" textLength="31.0" lengthAdjust="spacingAndGlyphs">alphaP_pu</text>
<line x1="553" y1="324.6" x2="580.5" y2="324.6" stroke="#1a1ae0" stroke-width="1.8"/>
<line x1="553" y1="341.9" x2="580.5" y2="341.9" stroke="#1a1ae0" stroke-width="1.8"/>
<rect x="553" y="353.3" width="14" height="13.1" fill="#fff" stroke="#1a1ae0" stroke-width="1.8"/>
<text x="560" y="362.3" font-size="6.5" fill="#202020" text-anchor="middle" textLength="11.0" lengthAdjust="spacingAndGlyphs">Leq</text>
<line x1="567" y1="360" x2="580.5" y2="360" stroke="#1a1ae0" stroke-width="1.8"/>
<line x1="668.5" y1="360" x2="690" y2="360" stroke="#1a1ae0" stroke-width="1.8"/>
<text x="558" y="322.7" font-size="7.5" fill="#ff2a2a" text-anchor="middle" textLength="10.0" lengthAdjust="spacingAndGlyphs">Vin</text>
<text x="560" y="340.2" font-size="7.5" fill="#ff2a2a" text-anchor="middle" textLength="14.0" lengthAdjust="spacingAndGlyphs">Vout</text>
<text x="560" y="351.5" font-size="7" fill="#202020" text-anchor="middle" textLength="11.0" lengthAdjust="spacingAndGlyphs">Leq</text>
<text x="682" y="358.2" font-size="7.5" fill="#ff2a2a" text-anchor="middle" textLength="9.0" lengthAdjust="spacingAndGlyphs">phi</text>
<rect x="768.5" y="0" width="185.0" height="368" fill="#ffffff"/>
<rect x="768.5" y="0" width="15" height="150" fill="#f0f0f0"/>
<rect x="768.5" y="0" width="185.0" height="4.5" fill="#e8e8e8"/>
<rect x="768.5" y="88.5" width="185.0" height="12.5" fill="#e8e8e8"/>
<rect x="772.5" y="-4" width="8" height="7" fill="none" stroke="#a0a0a0" stroke-width="1"/>
<text x="785" y="1.6" font-size="8.6" fill="#404040" font-weight="bold" textLength="66.0" lengthAdjust="spacingAndGlyphs">String Parameters</text>
<rect x="772.5" y="91" width="8" height="7.5" fill="none" stroke="#909090" stroke-width="1"/>
<line x1="774.5" y1="94.8" x2="778.5" y2="94.8" stroke="#606060" stroke-width="1"/>
<line x1="863" y1="4.5" x2="863" y2="368" stroke="#ececec" stroke-width="1"/>
<line x1="783.5" y1="16.5" x2="953.5" y2="16.5" stroke="#f0f0f0" stroke-width="1"/>
<line x1="783.5" y1="28.5" x2="953.5" y2="28.5" stroke="#f0f0f0" stroke-width="1"/>
<line x1="783.5" y1="40.5" x2="953.5" y2="40.5" stroke="#f0f0f0" stroke-width="1"/>
<line x1="783.5" y1="52.5" x2="953.5" y2="52.5" stroke="#f0f0f0" stroke-width="1"/>
<line x1="783.5" y1="64.5" x2="953.5" y2="64.5" stroke="#f0f0f0" stroke-width="1"/>
<line x1="783.5" y1="76.5" x2="953.5" y2="76.5" stroke="#f0f0f0" stroke-width="1"/>
<line x1="783.5" y1="113" x2="953.5" y2="113" stroke="#f0f0f0" stroke-width="1"/>
<line x1="783.5" y1="125" x2="953.5" y2="125" stroke="#f0f0f0" stroke-width="1"/>
<line x1="783.5" y1="137" x2="953.5" y2="137" stroke="#f0f0f0" stroke-width="1"/>
<line x1="783.5" y1="149.5" x2="953.5" y2="149.5" stroke="#f0f0f0" stroke-width="1"/>
<line x1="954.0" y1="0" x2="954.0" y2="368" stroke="#c8c8c8" stroke-width="1.2"/>
<text x="785" y="13.3" font-size="8.6" fill="#9a9a9a" textLength="35.0" lengthAdjust="spacingAndGlyphs">Text Order</text>
<text x="843" y="13.3" font-size="8.6" fill="#9a9a9a" textLength="15.0" lengthAdjust="spacingAndGlyphs">Invis.</text>
<text x="865" y="13.3" font-size="8.6" fill="#9a9a9a" textLength="29.0" lengthAdjust="spacingAndGlyphs">Content</text>
<text x="799.5" y="25.5" font-size="8.6" fill="#303030" font-weight="bold" textLength="23.0" lengthAdjust="spacingAndGlyphs">Name.</text>
<text x="865" y="25.5" font-size="8.6" fill="#303030" textLength="13.0" lengthAdjust="spacingAndGlyphs">X11</text>
<text x="785" y="37.7" font-size="8.6" fill="#303030" textLength="43.0" lengthAdjust="spacingAndGlyphs">1st attribute</text>
<text x="865" y="37.7" font-size="8.6" fill="#303030" textLength="85.0" lengthAdjust="spacingAndGlyphs">DRIVER-ISO-PUSHP...</text>
<text x="785" y="49.8" font-size="8.6" fill="#303030" textLength="20.0" lengthAdjust="spacingAndGlyphs">Vhigh</text>
<text x="865" y="49.8" font-size="8.6" fill="#303030" textLength="8.0" lengthAdjust="spacingAndGlyphs">15</text>
<text x="785" y="61.7" font-size="8.6" fill="#303030" textLength="17.0" lengthAdjust="spacingAndGlyphs">Vlow</text>
<text x="865" y="61.7" font-size="8.6" fill="#303030" textLength="6.0" lengthAdjust="spacingAndGlyphs">-5</text>
<text x="785" y="73.8" font-size="8.6" fill="#303030" textLength="17.0" lengthAdjust="spacingAndGlyphs">Rsrc</text>
<text x="865" y="73.8" font-size="8.6" fill="#303030" textLength="3.0" lengthAdjust="spacingAndGlyphs">1</text>
<text x="785" y="85.9" font-size="8.6" fill="#303030" textLength="43.0" lengthAdjust="spacingAndGlyphs">5th attribute</text>
<text x="865" y="85.9" font-size="8.6" fill="#303030" textLength="29.0" lengthAdjust="spacingAndGlyphs">Rsink=1</text>
<path d="M850.5,34.5 l1.8,2 l3.5,-4" fill="none" stroke="#202020" stroke-width="1.4"/>
<text x="785" y="97.9" font-size="8.6" fill="#505050" textLength="32.0" lengthAdjust="spacingAndGlyphs">Pin Nets</text>
<text x="785" y="110.1" font-size="8.6" fill="#9a9a9a" textLength="34.0" lengthAdjust="spacingAndGlyphs">Pin Name</text>
<text x="843" y="110.1" font-size="8.6" fill="#9a9a9a" textLength="15.0" lengthAdjust="spacingAndGlyphs">Invis.</text>
<text x="865" y="110.1" font-size="8.6" fill="#9a9a9a" textLength="13.0" lengthAdjust="spacingAndGlyphs">Net</text>
<text x="788.7" y="122.1" font-size="8.6" fill="#303030" textLength="37.0" lengthAdjust="spacingAndGlyphs">0 "boolIN"</text>
<text x="865" y="122.1" font-size="8.6" fill="#303030" textLength="27.0" lengthAdjust="spacingAndGlyphs">OUTAs</text>
<text x="788.7" y="134.1" font-size="8.6" fill="#303030" textLength="34.0" lengthAdjust="spacingAndGlyphs">1 "OUT+"</text>
<text x="865" y="134.1" font-size="8.6" fill="#303030" textLength="16.0" lengthAdjust="spacingAndGlyphs">G4s</text>
<text x="788.7" y="146.1" font-size="8.6" fill="#303030" textLength="33.0" lengthAdjust="spacingAndGlyphs">2 "OUT-"</text>
<text x="865" y="146.1" font-size="8.6" fill="#303030" textLength="15.0" lengthAdjust="spacingAndGlyphs">K4s</text>
<rect x="955" y="0" width="128" height="88.5" fill="#ffffff"/>
<rect x="955" y="0" width="128" height="14" fill="#f7f8fb"/>
<rect x="955" y="14.3" width="127.7" height="29.5" fill="#fdf5d8"/>
<line x1="955" y1="43.8" x2="1082.7" y2="43.8" stroke="#e8d8a0" stroke-width="1"/>
<rect x="957" y="44.8" width="118" height="13.8" fill="#eef4fb"/>
<rect x="957" y="74.2" width="118" height="14.3" fill="#fcecec"/>
<rect x="1078" y="44" width="4" height="10" fill="#c8c8c8"/>
<circle cx="1043" cy="3.5" r="4" fill="none" stroke="#404040" stroke-width="1.2"/>
<circle cx="1043" cy="3.5" r="1.6" fill="none" stroke="#404040" stroke-width="1"/>
<line x1="1047.0" y1="3.5" x2="1048.6" y2="3.5" stroke="#404040" stroke-width="1.6"/>
<line x1="1045.8284271247462" y1="6.32842712474619" x2="1046.9597979746447" y2="7.459797974644665" stroke="#404040" stroke-width="1.6"/>
<line x1="1043.0" y1="7.5" x2="1043.0" y2="9.1" stroke="#404040" stroke-width="1.6"/>
<line x1="1040.1715728752538" y1="6.32842712474619" x2="1039.0402020253553" y2="7.459797974644666" stroke="#404040" stroke-width="1.6"/>
<line x1="1039.0" y1="3.5000000000000004" x2="1037.4" y2="3.500000000000001" stroke="#404040" stroke-width="1.6"/>
<line x1="1040.1715728752538" y1="0.6715728752538102" x2="1039.0402020253553" y2="-0.45979797464466543" stroke="#404040" stroke-width="1.6"/>
<line x1="1043.0" y1="-0.5" x2="1043.0" y2="-2.0999999999999996" stroke="#404040" stroke-width="1.6"/>
<line x1="1045.8284271247462" y1="0.6715728752538093" x2="1046.9597979746447" y2="-0.45979797464466676" stroke="#404040" stroke-width="1.6"/>
<path d="M1050,2.5 h5 l-2.5,3 z" fill="#303030"/>
<rect x="1065.5" y="-1" width="9" height="8" fill="#fffbe0" stroke="#d8b850" stroke-width="1.2"/>
<rect x="1069" y="2" width="2" height="2" fill="#806020"/>
<rect x="955" y="88.8" width="894.5999999999999" height="23.2" fill="#ffffff"/>
<rect x="955" y="112" width="894.5999999999999" height="16" fill="#eceef9"/>
<rect x="955" y="128" width="894.5999999999999" height="19" fill="url(#tb)"/>
<rect x="1056" y="147" width="793.5999999999999" height="221" fill="#fffde8"/>
<rect x="1054" y="147" width="2" height="221" fill="#c8c8cc"/>
<text x="955" y="104.0" font-size="9.6" fill="#9a9a9a" textLength="121.0" lengthAdjust="spacingAndGlyphs">PICE® - DAB_control_test.qsch</text>
<line x1="1757" y1="100.5" x2="1767" y2="100.5" stroke="#c4c4c4" stroke-width="1"/>
<rect x="1792" y="95.5" width="8" height="9.5" fill="none" stroke="#c4c4c4" stroke-width="1"/>
<line x1="1827" y1="95.5" x2="1837" y2="105.5" stroke="#c4c4c4" stroke-width="1"/>
<line x1="1837" y1="95.5" x2="1827" y2="105.5" stroke="#c4c4c4" stroke-width="1"/>
<text x="955" y="122.7" font-size="9" fill="#1a1a2a" textLength="7.0" lengthAdjust="spacingAndGlyphs">w</text>
<text x="968" y="122.7" font-size="9" fill="#1a1a2a" textLength="21.0" lengthAdjust="spacingAndGlyphs">Help</text>
<path d="M956,130 L961,140 M962,130 L957,140" stroke="#a8b4cc" stroke-width="1.2"/>
<circle cx="956" cy="141" r="1.8" fill="none" stroke="#a8b4cc" stroke-width="1"/>
<circle cx="962" cy="141" r="1.8" fill="none" stroke="#a8b4cc" stroke-width="1"/>
<rect x="969" y="131" width="8" height="9" fill="#e8ecf8" stroke="#b8c4dc" stroke-width="1"/>
<rect x="973" y="135" width="8" height="9" fill="#e4eaf8" stroke="#b0bcd8" stroke-width="1"/>
<rect x="985" y="131" width="10" height="12" fill="#eee0a8" stroke="#c8b880" stroke-width="1"/>
<rect x="990" y="136" width="7" height="8" fill="#f2f4fa" stroke="#b8c0d0" stroke-width="1"/>
<line x1="1002" y1="130" x2="1002" y2="144" stroke="#c8cad4" stroke-width="1"/>
<path d="M1006.6,135 h12 v6 h-12 z" fill="#50545c"/>
<rect x="1009.1" y="130" width="7" height="6" fill="#f4f4f4" stroke="#50545c" stroke-width="1"/>
<rect x="1009.6" y="139" width="6" height="5" fill="#fff" stroke="#50545c" stroke-width="1"/>
<circle cx="1028.7" cy="137" r="6" fill="#2a62c8" stroke="#1a3c90" stroke-width="1"/>
<text x="1028.7" y="139.9" font-size="8" fill="#fff" text-anchor="middle" font-weight="bold">?</text>
<circle cx="1046" cy="137" r="6.5" fill="#28b828" stroke="#108010" stroke-width="1"/>
<circle cx="1046" cy="137.5" r="3" fill="none" stroke="#fff" stroke-width="1.2"/>
<line x1="1046" y1="133" x2="1046" y2="137" stroke="#fff" stroke-width="1.2"/>
<rect x="955" y="147" width="99" height="221" fill="#ffffff"/>
<rect x="955" y="147" width="99" height="14" fill="#dfe4ec"/>
<rect x="955" y="161" width="99" height="19" fill="url(#brh)"/>
<text x="955" y="157.0" font-size="9" fill="#303040" textLength="23.0" lengthAdjust="spacingAndGlyphs">owser</text>
<path d="M1031,151.5 h8 l-4,4.5 z" fill="#202020"/>
<line x1="1043" y1="150" x2="1049" y2="157" stroke="#202020" stroke-width="1.6"/>
<line x1="1049" y1="150" x2="1043" y2="157" stroke="#202020" stroke-width="1.6"/>
<text x="955.5" y="190.6" font-size="9" fill="#202020" font-weight="bold" textLength="6.0" lengthAdjust="spacingAndGlyphs">P</text>
<text x="955" y="205.1" font-size="9.2" fill="#303030" textLength="78.0" lengthAdjust="spacingAndGlyphs">nbols(Native Devices)</text>
<text x="955" y="247.3" font-size="9.2" fill="#303030" textLength="96.2" lengthAdjust="spacingAndGlyphs">50-102 - RFPoL Voltage I</text>
<text x="955" y="261.5" font-size="9.2" fill="#303030" textLength="92.7" lengthAdjust="spacingAndGlyphs">50 - 400V Input, Battery/</text>
<text x="955" y="275.6" font-size="9.2" fill="#303030" textLength="94.6" lengthAdjust="spacingAndGlyphs">3A - Wide Input Sensorle</text>
<text x="955" y="289.8" font-size="9.2" fill="#303030" textLength="95.1" lengthAdjust="spacingAndGlyphs">3B - Wide Input Sensorle</text>
<text x="955" y="303.9" font-size="9.2" fill="#303030" textLength="98.0" lengthAdjust="spacingAndGlyphs">50 - 160V 3-Phase BLDC/</text>
<text x="955" y="318.1" font-size="9.2" fill="#303030" textLength="84.2" lengthAdjust="spacingAndGlyphs">002 - Dual ESD Diode</text>
<text x="955" y="360.3" font-size="9.2" fill="#303030" textLength="4.0" lengthAdjust="spacingAndGlyphs">s</text>
<text x="1241" y="151.4" font-size="8" fill="#202020" textLength="18.0" lengthAdjust="spacingAndGlyphs">.param</text>
<rect x="1239" y="152.1" width="37.4" height="16.3" fill="#fff" stroke="#1a1ae0" stroke-width="1.8"/>
<line x1="1243.675" y1="154.6" x2="1243.675" y2="165.9" stroke="#1a1ae0" stroke-width="1.5"/>
<path d="M1240.683,157.642 L1246.667,157.642 L1243.675,162.206 z" fill="#1a1ae0"/>
<line x1="1240.683" y1="159.435" x2="1246.667" y2="159.435" stroke="#1a1ae0" stroke-width="1.3"/>
<line x1="1253.025" y1="154.6" x2="1253.025" y2="165.9" stroke="#1a1ae0" stroke-width="1.5"/>
<path d="M1250.0330000000001,161.55399999999997 L1256.017,161.55399999999997 L1253.025,156.98999999999998 z" fill="#1a1ae0"/>
<line x1="1262.375" y1="154.6" x2="1262.375" y2="165.9" stroke="#1a1ae0" stroke-width="1.5"/>
<path d="M1259.383,157.642 L1265.367,157.642 L1262.375,162.206 z" fill="#1a1ae0"/>
<line x1="1259.383" y1="159.435" x2="1265.367" y2="159.435" stroke="#1a1ae0" stroke-width="1.3"/>
<line x1="1271.725" y1="154.6" x2="1271.725" y2="165.9" stroke="#1a1ae0" stroke-width="1.5"/>
<path d="M1268.733,161.55399999999997 L1274.7169999999999,161.55399999999997 L1271.725,156.98999999999998 z" fill="#1a1ae0"/>
<text x="1242" y="177.2" font-size="9" fill="#202020" textLength="90.0" lengthAdjust="spacingAndGlyphs">fsw=100K  w = 2*pi*frq</text>
<text x="1242" y="185.2" font-size="9" fill="#202020" textLength="67.5" lengthAdjust="spacingAndGlyphs">num_period=2000</text>
<text x="1242" y="192.7" font-size="9" fill="#202020" textLength="36.0" lengthAdjust="spacingAndGlyphs">Vin = 750</text>
<text x="1242" y="200.7" font-size="9" fill="#202020" textLength="34.0" lengthAdjust="spacingAndGlyphs">Leq = 5p</text>
<text x="1242" y="208.7" font-size="9" fill="#202020" textLength="61.5" lengthAdjust="spacingAndGlyphs">Voutcomm = Vin</text>
<text x="1244" y="219.1" font-size="8.5" fill="#202020" textLength="67.0" lengthAdjust="spacingAndGlyphs">.option SaveParam</text>
<text x="1244" y="226.6" font-size="8.5" fill="#202020" textLength="91.0" lengthAdjust="spacingAndGlyphs">.tran num_period/fsw uic</text>
<rect x="1270.8" y="252.2" width="105.7" height="130" fill="#c8c8c8" stroke="#1a1ae0" stroke-width="2"/>
<text x="1292" y="263.4" font-size="8" fill="#202020" text-anchor="middle" textLength="14.0" lengthAdjust="spacingAndGlyphs">X15</text>
<text x="1324" y="260.8" font-size="5" fill="#202020" text-anchor="middle" textLength="21.0" lengthAdjust="spacingAndGlyphs">DAB_ctrl</text>
<text x="1274" y="272.1" font-size="8.5" fill="#202020" textLength="12.0" lengthAdjust="spacingAndGlyphs">Vin</text>
<text x="1274" y="293.1" font-size="8.5" fill="#202020" textLength="17.0" lengthAdjust="spacingAndGlyphs">Vout</text>
<text x="1274" y="314.1" font-size="8.5" fill="#202020" textLength="13.0" lengthAdjust="spacingAndGlyphs">Leq</text>
<text x="1274" y="340.1" font-size="8.5" fill="#202020" textLength="12.0" lengthAdjust="spacingAndGlyphs">fsw</text>
<text x="1274" y="360.6" font-size="8.5" fill="#202020" textLength="11.0" lengthAdjust="spacingAndGlyphs">clk</text>
<text x="1373" y="314.1" font-size="8.5" fill="#202020" text-anchor="end" textLength="37.0" lengthAdjust="spacingAndGlyphs">alphaP_pu</text>
<text x="1370" y="329.7" font-size="8.5" fill="#202020" text-anchor="end" textLength="35.0" lengthAdjust="spacingAndGlyphs">alphaS_pu</text>
<rect x="1374" y="324.3" width="4.6" height="4.6" fill="#fff" stroke="#000" stroke-width="1.4"/>
<circle cx="1176" cy="278.8" r="7.2" fill="none" stroke="#1a1ae0" stroke-width="1.8"/>
<path d="M1176,274.8 v3 M1174.5,276.3 h3 M1174.5,281.8 h3" fill="none" stroke="#1a1ae0" stroke-width="1.1"/>
<polyline points="1176.0,271.6 1176.0,267.7 1270.8,267.7" fill="none" stroke="#1a1ae0" stroke-width="1.8"/>
<line x1="1176" y1="286.0" x2="1176" y2="295.8" stroke="#1a1ae0" stroke-width="1.8"/>
<path d="M1171.5,295.8 h9 l-4.5,4.5 z" fill="none" stroke="#1a1ae0" stroke-width="1.6"/>
<text x="1183" y="274.9" font-size="8.5" fill="#202020" textLength="10.0" lengthAdjust="spacingAndGlyphs">V2</text>
<text x="1182" y="289.9" font-size="8.5" fill="#202020" textLength="13.0" lengthAdjust="spacingAndGlyphs">Vin</text>
<text x="1204" y="267.1" font-size="8.5" fill="#ff2a2a" text-anchor="middle" textLength="14.0" lengthAdjust="spacingAndGlyphs">Vin</text>
<circle cx="1204" cy="267.7" r="1.3" fill="#ff2a2a"/>
<circle cx="1202.3" cy="304.6" r="7.2" fill="none" stroke="#1a1ae0" stroke-width="1.8"/>
<path d="M1202.3,300.6 v3 M1200.8,302.1 h3 M1200.8,307.6 h3" fill="none" stroke="#1a1ae0" stroke-width="1.1"/>
<polyline points="1202.3,297.4 1202.3,289.1 1270.8,289.1" fill="none" stroke="#1a1ae0" stroke-width="1.8"/>
<line x1="1202.3" y1="311.8" x2="1202.3" y2="321.6" stroke="#1a1ae0" stroke-width="1.8"/>
<path d="M1197.8,321.6 h9 l-4.5,4.5 z" fill="none" stroke="#1a1ae0" stroke-width="1.6"/>
<text x="1209.3" y="300.7" font-size="8.5" fill="#202020" textLength="10.0" lengthAdjust="spacingAndGlyphs">V1</text>
<text x="1244" y="288.6" font-size="8.5" fill="#ff2a2a" text-anchor="middle" textLength="19.0" lengthAdjust="spacingAndGlyphs">Vout</text>
<circle cx="1244" cy="289.1" r="1.3" fill="#ff2a2a"/>
<rect x="1239" y="302" width="16.3" height="16" fill="#fff" stroke="#1a1ae0" stroke-width="1.8"/>
<text x="1247.2" y="312.9" font-size="8" fill="#202020" text-anchor="middle" textLength="13.0" lengthAdjust="spacingAndGlyphs">Leq</text>
<text x="1240" y="300.6" font-size="8.5" fill="#202020" textLength="13.0" lengthAdjust="spacingAndGlyphs">Leq</text>
<line x1="1255.3" y1="310.4" x2="1270.8" y2="310.4" stroke="#1a1ae0" stroke-width="1.8"/>
<rect x="1239" y="328.3" width="16.3" height="16.80000000000001" fill="#fff" stroke="#1a1ae0" stroke-width="1.8"/>
<text x="1247.2" y="339.6" font-size="8" fill="#202020" text-anchor="middle" textLength="13.0" lengthAdjust="spacingAndGlyphs">fsw</text>
<text x="1240" y="326.6" font-size="8.5" fill="#202020" textLength="13.0" lengthAdjust="spacingAndGlyphs">fsw</text>
<line x1="1255.3" y1="336.9" x2="1270.8" y2="336.9" stroke="#1a1ae0" stroke-width="1.8"/>
<line x1="1239" y1="357.5" x2="1270.8" y2="357.5" stroke="#1a1ae0" stroke-width="1.8"/>
<text x="1250" y="355.6" font-size="8.5" fill="#ff2a2a" text-anchor="middle" textLength="11.0" lengthAdjust="spacingAndGlyphs">clk</text>
<circle cx="1250" cy="357.5" r="1.3" fill="#ff2a2a"/>
<text x="1056" y="337.2" font-size="9" fill="#202020" textLength="167.0" lengthAdjust="spacingAndGlyphs">e 680 820 1n num_period/fsw num_period/fsw</text>
<text x="1056" y="364.2" font-size="9" fill="#202020" textLength="28.0" lengthAdjust="spacingAndGlyphs">utcomm</text>
<rect x="1070.5" y="365.5" width="16" height="10" fill="none" stroke="#1a1ae0" stroke-width="1.8"/>
<rect x="1139.5" y="346.5" width="79.5" height="30" fill="#c8c8c8" stroke="#1a1ae0" stroke-width="2"/>
<text x="1179" y="352.5" font-size="5.5" fill="#202020" text-anchor="middle" textLength="40.0" lengthAdjust="spacingAndGlyphs">DAB_outerLoop</text>
<text x="1143" y="361.1" font-size="8.5" fill="#202020" textLength="17.0" lengthAdjust="spacingAndGlyphs">Vout</text>
<text x="1179" y="367.1" font-size="8.5" fill="#202020" text-anchor="middle" textLength="14.0" lengthAdjust="spacingAndGlyphs">X16</text>
<line x1="1102" y1="357" x2="1139.5" y2="357" stroke="#1a1ae0" stroke-width="1.8"/>
<text x="1107" y="355.6" font-size="8.5" fill="#ff2a2a" text-anchor="middle" textLength="19.0" lengthAdjust="spacingAndGlyphs">Vout</text>
<circle cx="1107" cy="357" r="1.3" fill="#ff2a2a"/>
<text x="1228" y="371.6" font-size="8.5" fill="#ff2a2a" text-anchor="middle" textLength="17.0" lengthAdjust="spacingAndGlyphs">Pref</text>
<line x1="1376.5" y1="309.8" x2="1423.5" y2="309.8" stroke="#1a1ae0" stroke-width="1.8"/>
<text x="1397" y="309.1" font-size="8.5" fill="#ff2a2a" text-anchor="middle" textLength="11.0" lengthAdjust="spacingAndGlyphs">phi</text>
<circle cx="1397" cy="310" r="1.3" fill="#ff2a2a"/>
<g transform="translate(1423 242.4) scale(1.2) translate(-203.6 -127.6)">
<rect x="203.6" y="127.6" width="101.1" height="75.30000000000001" fill="#c2dcf8" stroke="#1a1ae0" stroke-width="2"/>
<polyline points="212.0,127.6 212.0,105.3 235.0,105.3" fill="none" stroke="#1a1ae0" stroke-width="2"/>
<line x1="212" y1="128" x2="212" y2="156" stroke="#1a1ae0" stroke-width="1.6" stroke-dasharray="3,2"/>
<circle cx="212" cy="128" r="1.8" fill="#1a1ae0"/>
<rect x="207.4" y="156.4" width="18.6" height="12.8" fill="none" stroke="#1a1ae0" stroke-width="1.6"/>
<text x="216.7" y="165.5" font-size="7" fill="#2828c8" text-anchor="middle" textLength="13.0" lengthAdjust="spacingAndGlyphs">OSC</text>
<path d="M207,181 l3,-5 v5 l3,-5 v5 l3,-5 v5 l3,-5 v5" fill="none" stroke="#1a1ae0" stroke-width="1.6"/>
<circle cx="230" cy="158" r="2.3" fill="#1a1ae0"/>
<polyline points="226.0,158.0 230.0,158.0 230.0,177.0 236.0,177.0" fill="none" stroke="#1a1ae0" stroke-width="1.6"/>
<path d="M236,143 L251,154 L236,165 z" fill="#c2dcf8" stroke="#1a1ae0" stroke-width="1.6"/>
<path d="M242,149 l-2,4 h3 l-2,4 M244,149 l-1,2" fill="none" stroke="#1a1ae0" stroke-width="1"/>
<path d="M236,169 L251,180 L236,191 z" fill="#c2dcf8" stroke="#1a1ae0" stroke-width="1.6"/>
<path d="M242,175 l-2,4 h3 l-2,4 M244,175 l-1,2" fill="none" stroke="#1a1ae0" stroke-width="1"/>
<circle cx="233.5" cy="149" r="2" fill="#c2dcf8" stroke="#1a1ae0" stroke-width="1.2"/>
<circle cx="233.5" cy="185" r="2" fill="#c2dcf8" stroke="#1a1ae0" stroke-width="1.2"/>
<line x1="225" y1="149" x2="231.5" y2="149" stroke="#1a1ae0" stroke-width="1.5"/>
<text x="222" y="151.5" font-size="7" fill="#2828c8" text-anchor="middle" textLength="7.0" lengthAdjust="spacingAndGlyphs">LL</text>
<text x="225" y="103.7" font-size="7.5" fill="#ff2a2a" text-anchor="middle" textLength="9.0" lengthAdjust="spacingAndGlyphs">clk</text>
<rect x="260" y="140.5" width="13.3" height="17.400000000000006" fill="#c2dcf8" stroke="#1a1ae0" stroke-width="1.6"/>
<text x="263" y="147.2" font-size="6" fill="#2828c8" textLength="4.0" lengthAdjust="spacingAndGlyphs">D</text>
<circle cx="276" cy="144" r="2" fill="#c2dcf8" stroke="#1a1ae0" stroke-width="1.2"/>
<polyline points="260.0,147.5 256.0,147.5 256.0,136.0 282.0,136.0 282.0,144.0 278.0,144.0" fill="none" stroke="#1a1ae0" stroke-width="1.6"/>
<circle cx="282" cy="136" r="2.3" fill="#1a1ae0"/>
<line x1="251" y1="153.9" x2="260" y2="153.9" stroke="#1a1ae0" stroke-width="1.6"/>
<rect x="260" y="167.7" width="13.3" height="16.700000000000017" fill="#c2dcf8" stroke="#1a1ae0" stroke-width="1.6"/>
<text x="263" y="174.4" font-size="6" fill="#2828c8" textLength="4.0" lengthAdjust="spacingAndGlyphs">D</text>
<circle cx="276" cy="171" r="2" fill="#c2dcf8" stroke="#1a1ae0" stroke-width="1.2"/>
<polyline points="260.0,174.7 256.0,174.7 256.0,163.0 282.0,163.0 282.0,171.0 278.0,171.0" fill="none" stroke="#1a1ae0" stroke-width="1.6"/>
<circle cx="282" cy="171" r="2.3" fill="#1a1ae0"/>
<line x1="251" y1="180.4" x2="260" y2="180.4" stroke="#1a1ae0" stroke-width="1.6"/>
<line x1="282" y1="136" x2="304.7" y2="136" stroke="#1a1ae0" stroke-width="1.8"/>
<polyline points="273.3,153.0 304.7,153.0" fill="none" stroke="#1a1ae0" stroke-width="1.8"/>
<polyline points="282.0,171.0 312.9,171.0 312.9,189.0 317.4,189.0" fill="none" stroke="#1a1ae0" stroke-width="1.8"/>
<polyline points="273.3,179.0 280.0,179.0 280.0,189.0 304.7,189.0" fill="none" stroke="#1a1ae0" stroke-width="1.8"/>
<rect x="302.5" y="150.5" width="5" height="5" fill="#fff" stroke="#000" stroke-width="1.4"/>
<rect x="302.5" y="186.5" width="5" height="5" fill="#fff" stroke="#000" stroke-width="1.4"/>
<text x="304" y="119.7" font-size="7.5" fill="#202020" text-anchor="end" textLength="8.0" lengthAdjust="spacingAndGlyphs">X1</text>
<text x="304" y="126.2" font-size="7.5" fill="#202020" text-anchor="end" textLength="72.0" lengthAdjust="spacingAndGlyphs">PWM PHASESHIFT IV&amp;I</text>
<text x="214" y="134.7" font-size="7.5" fill="#202020" textLength="28.0" lengthAdjust="spacingAndGlyphs">Sawtooth</text>
<text x="303" y="134.2" font-size="7.5" fill="#202020" text-anchor="end" textLength="16.0" lengthAdjust="spacingAndGlyphs">OutA</text>
<text x="303" y="151.7" font-size="7.5" fill="#202020" text-anchor="end" textLength="16.0" lengthAdjust="spacingAndGlyphs">OutB</text>
<text x="303" y="170.2" font-size="7.5" fill="#202020" text-anchor="end" textLength="16.0" lengthAdjust="spacingAndGlyphs">OutC</text>
<text x="303" y="187.7" font-size="7.5" fill="#202020" text-anchor="end" textLength="16.0" lengthAdjust="spacingAndGlyphs">OutD</text>
<text x="205" y="192.2" font-size="7.5" fill="#202020" textLength="11.0" lengthAdjust="spacingAndGlyphs">Ctrl</text>
<text x="205" y="198.2" font-size="6" fill="#2828c8" textLength="57.0" lengthAdjust="spacingAndGlyphs">0-1V (-90 to 90 degree)</text>
<text x="304" y="209.7" font-size="7.5" fill="#202020" text-anchor="end" textLength="22.0" lengthAdjust="spacingAndGlyphs">fsw=fsw</text>
<text x="304" y="216.2" font-size="7.5" fill="#202020" text-anchor="end" textLength="23.0" lengthAdjust="spacingAndGlyphs">Tdelay=0</text>
<text x="304" y="222.7" font-size="7.5" fill="#202020" text-anchor="end" textLength="18.0" lengthAdjust="spacingAndGlyphs">ttol=1n</text>
<rect x="317.4" y="132.1" width="44.0" height="26.200000000000017" fill="#c2dcf8" stroke="#1a1ae0" stroke-width="2"/>
<g transform="translate(317.4 132.1) scale(1.0 0.9961977186311793) translate(-317.4 -132.1)"><path d="M326.4,144.7 h4 v-8.3 h6.5 v8.3 h11.3 v-8.3 h3.8" fill="none" stroke="#1a1ae0" stroke-width="1.6"/><path d="M326.4,145.9 l1.6,2 v8 h11.4 v-8.8 h6.3 v8.8 h6.3" fill="none" stroke="#1a1ae0" stroke-width="1.6"/></g>
<rect x="317.4" y="184.4" width="44.0" height="26.5" fill="#c2dcf8" stroke="#1a1ae0" stroke-width="2"/>
<g transform="translate(317.4 184.4) scale(1.0 1.0076045627376427) translate(-317.4 -184.4)"><path d="M326.4,197.0 h4 v-8.3 h6.5 v8.3 h11.3 v-8.3 h3.8" fill="none" stroke="#1a1ae0" stroke-width="1.6"/><path d="M326.4,198.20000000000002 l1.6,2 v8 h11.4 v-8.8 h6.3 v8.8 h6.3" fill="none" stroke="#1a1ae0" stroke-width="1.6"/></g>
<text x="318" y="124.7" font-size="7.5" fill="#202020" textLength="8.0" lengthAdjust="spacingAndGlyphs">X8</text>
<text x="318" y="176.7" font-size="7.5" fill="#202020" textLength="8.0" lengthAdjust="spacingAndGlyphs">X9</text>
<text x="317" y="131.2" font-size="7.5" fill="#202020" textLength="49.0" lengthAdjust="spacingAndGlyphs">GATE DEADTIME</text>
<text x="317" y="183.7" font-size="7.5" fill="#202020" textLength="49.0" lengthAdjust="spacingAndGlyphs">GATE DEADTIME</text>
<text x="320" y="139.4" font-size="6.5" fill="#202020" textLength="7.0" lengthAdjust="spacingAndGlyphs">IN</text>
<text x="359" y="139.4" font-size="6.5" fill="#202020" text-anchor="end" textLength="4.0" lengthAdjust="spacingAndGlyphs">Q</text>
<text x="359" y="155.4" font-size="6.5" fill="#202020" text-anchor="end" textLength="4.0" lengthAdjust="spacingAndGlyphs">Q</text>
<text x="320" y="191.7" font-size="6.5" fill="#202020" textLength="7.0" lengthAdjust="spacingAndGlyphs">IN</text>
<text x="359" y="191.7" font-size="6.5" fill="#202020" text-anchor="end" textLength="4.0" lengthAdjust="spacingAndGlyphs">Q</text>
<text x="359" y="207.7" font-size="6.5" fill="#202020" text-anchor="end" textLength="4.0" lengthAdjust="spacingAndGlyphs">Q</text>
<text x="317" y="166.7" font-size="7.5" fill="#202020" textLength="48.0" lengthAdjust="spacingAndGlyphs">deadtime=500n</text>
<text x="335" y="173.2" font-size="7.5" fill="#202020" textLength="19.0" lengthAdjust="spacingAndGlyphs">ttol=1n</text>
<text x="317" y="219.2" font-size="7.5" fill="#202020" textLength="48.0" lengthAdjust="spacingAndGlyphs">deadtime=500n</text>
<text x="317" y="225.7" font-size="7.5" fill="#202020" textLength="19.0" lengthAdjust="spacingAndGlyphs">ttol=1n</text>
<line x1="304.7" y1="135.9" x2="317.4" y2="135.9" stroke="#1a1ae0" stroke-width="1.8"/>
</g>
<text x="1638" y="250.7" font-size="9" fill="#ff2a2a" text-anchor="middle" textLength="26.0" lengthAdjust="spacingAndGlyphs">OUTAs</text>
<circle cx="1633" cy="251.5" r="1.3" fill="#ff2a2a"/>
<text x="1638" y="272.7" font-size="9" fill="#ff2a2a" text-anchor="middle" textLength="25.0" lengthAdjust="spacingAndGlyphs">OUTBs</text>
<circle cx="1633" cy="273.5" r="1.3" fill="#ff2a2a"/>
<text x="1638" y="314.7" font-size="9" fill="#ff2a2a" text-anchor="middle" textLength="22.0" lengthAdjust="spacingAndGlyphs">OUTA</text>
<circle cx="1633" cy="315.5" r="1.3" fill="#ff2a2a"/>
<text x="1638" y="335.7" font-size="9" fill="#ff2a2a" text-anchor="middle" textLength="22.0" lengthAdjust="spacingAndGlyphs">OUTB</text>
<circle cx="1633" cy="336.5" r="1.3" fill="#ff2a2a"/>
<line x1="1613.4" y1="251.5" x2="1649.6" y2="251.5" stroke="#1a1ae0" stroke-width="1.8"/>
<line x1="1613.4" y1="273" x2="1649.6" y2="273" stroke="#1a1ae0" stroke-width="1.8"/>
<line x1="1613.4" y1="315.4" x2="1649.6" y2="315.4" stroke="#1a1ae0" stroke-width="1.8"/>
<line x1="1613.4" y1="337" x2="1649.6" y2="337" stroke="#1a1ae0" stroke-width="1.8"/>
<text x="1405" y="150.9" font-size="8.5" fill="#2828c8" textLength="110.0" lengthAdjust="spacingAndGlyphs">positive phi is power from pri to sec</text>
<text x="1405" y="159.1" font-size="8.5" fill="#2828c8" textLength="105.0" lengthAdjust="spacingAndGlyphs">pri leading sec is positive phi.</text>
<text x="1412" y="174.6" font-size="8.5" fill="#2828c8" textLength="282.0" lengthAdjust="spacingAndGlyphs">for Vout &lt;&lt; setpoint, need positve power: phi = 1, OUTA leads OUTAS by 90</text>
<text x="1408" y="187.6" font-size="8.5" fill="#2828c8" textLength="206.5" lengthAdjust="spacingAndGlyphs">for Vout &gt;&gt; setpoint: phi = 1, OUTAS leads OUTA by 90</text>
<text x="1655" y="201.1" font-size="8.5" fill="#2828c8" textLength="167.0" lengthAdjust="spacingAndGlyphs">the config where 0 phase means inductor sides</text>
<text x="1655" y="211.6" font-size="8.5" fill="#2828c8" textLength="99.5" lengthAdjust="spacingAndGlyphs">move together doesn't work</text>
<text x="1649" y="295.1" font-size="8.5" fill="#2828c8" textLength="60.8" lengthAdjust="spacingAndGlyphs">this config works</text>
<rect x="955" y="128" width="894.5999999999999" height="19" fill="url(#tb)"/>
<path d="M956,130 L961,140 M962,130 L957,140" stroke="#a8b4cc" stroke-width="1.2"/>
<circle cx="956" cy="141" r="1.8" fill="none" stroke="#a8b4cc" stroke-width="1"/>
<circle cx="962" cy="141" r="1.8" fill="none" stroke="#a8b4cc" stroke-width="1"/>
<rect x="969" y="131" width="8" height="9" fill="#e8ecf8" stroke="#b8c4dc" stroke-width="1"/>
<rect x="973" y="135" width="8" height="9" fill="#e4eaf8" stroke="#b0bcd8" stroke-width="1"/>
<rect x="985" y="131" width="10" height="12" fill="#eee0a8" stroke="#c8b880" stroke-width="1"/>
<rect x="990" y="136" width="7" height="8" fill="#f2f4fa" stroke="#b8c0d0" stroke-width="1"/>
<line x1="1002" y1="130" x2="1002" y2="144" stroke="#c8cad4" stroke-width="1"/>
<path d="M1006.6,135 h12 v6 h-12 z" fill="#50545c"/>
<rect x="1009.1" y="130" width="7" height="6" fill="#f4f4f4" stroke="#50545c" stroke-width="1"/>
<rect x="1009.6" y="139" width="6" height="5" fill="#fff" stroke="#50545c" stroke-width="1"/>
<circle cx="1028.7" cy="137" r="6" fill="#2a62c8" stroke="#1a3c90" stroke-width="1"/>
<text x="1028.7" y="139.9" font-size="8" fill="#fff" text-anchor="middle" font-weight="bold">?</text>
<circle cx="1046" cy="137" r="6.5" fill="#28b828" stroke="#108010" stroke-width="1"/>
<circle cx="1046" cy="137.5" r="3" fill="none" stroke="#fff" stroke-width="1.2"/>
<line x1="1046" y1="133" x2="1046" y2="137" stroke="#fff" stroke-width="1.2"/>
<rect x="0" y="368" width="950" height="23" fill="#ffffff"/>
<rect x="0" y="391" width="950" height="17" fill="#eceef9"/>
<rect x="0" y="408" width="950" height="18" fill="url(#tb)"/>
<rect x="0" y="426" width="949" height="465" fill="#000"/>
<rect x="949" y="368" width="6" height="523" fill="#f4f6f8"/>
<line x1="0" y1="368.5" x2="950" y2="368.5" stroke="#c8c8c8" stroke-width="1"/>
<circle cx="-1" cy="380" r="6" fill="#1a8ad4"/>
<text x="5" y="383.5" font-size="9.6" fill="#303030" textLength="192.0" lengthAdjust="spacingAndGlyphs">Qorvo QSPICE® - CBB011M12GM41_test6.qraw</text>
<line x1="857" y1="380.5" x2="867" y2="380.5" stroke="#303030" stroke-width="1.2"/>
<rect x="892" y="375.5" width="8" height="9.5" fill="none" stroke="#303030" stroke-width="1.1"/>
<line x1="927" y1="375.5" x2="937" y2="385.5" stroke="#303030" stroke-width="1.1"/>
<line x1="937" y1="375.5" x2="927" y2="385.5" stroke="#303030" stroke-width="1.1"/>
<text x="-1" y="402.7" font-size="9" fill="#1a1a2a" textLength="7.0" lengthAdjust="spacingAndGlyphs">le</text>
<text x="13.5" y="402.7" font-size="9" fill="#1a1a2a" textLength="14.0" lengthAdjust="spacingAndGlyphs">Edit</text>
<text x="35" y="402.7" font-size="9" fill="#1a1a2a" textLength="18.0" lengthAdjust="spacingAndGlyphs">View</text>
<text x="61" y="402.7" font-size="9" fill="#1a1a2a" textLength="17.5" lengthAdjust="spacingAndGlyphs">Help</text>
<path d="M-3,410 h6 l3,3 v9 h-9 z" fill="#fff" stroke="#8890a0" stroke-width="1"/>
<path d="M8,413 h5 l1,-2 h6 v8 h-12 z" fill="#f0c040" stroke="#b08020" stroke-width="1"/>
<rect x="26" y="410" width="11" height="12" fill="#4a52b4"/>
<rect x="28" y="410" width="7" height="4.5" fill="#f0f0fa"/>
<rect x="29" y="418" width="4" height="3" fill="#fff"/>
<line x1="42" y1="409" x2="42" y2="423" stroke="#c8cad4" stroke-width="1"/>
<path d="M49,409 L54,419 M55,409 L50,419" stroke="#a8b4cc" stroke-width="1.2"/>
<circle cx="49" cy="420" r="1.8" fill="none" stroke="#a8b4cc" stroke-width="1"/>
<circle cx="55" cy="420" r="1.8" fill="none" stroke="#a8b4cc" stroke-width="1"/>
<rect x="62" y="410" width="8" height="9" fill="#e8ecf8" stroke="#b8c4dc" stroke-width="1"/>
<rect x="66" y="414" width="8" height="9" fill="#e4eaf8" stroke="#b0bcd8" stroke-width="1"/>
<rect x="79" y="410" width="10" height="12" fill="#eee0a8" stroke="#c8b880" stroke-width="1"/>
<rect x="84" y="415" width="7" height="8" fill="#f2f4fa" stroke="#b8c0d0" stroke-width="1"/>
<line x1="95" y1="409" x2="95" y2="423" stroke="#c8cad4" stroke-width="1"/>
<path d="M99,414 h12 v6 h-12 z" fill="#50545c"/>
<rect x="101.5" y="409" width="7" height="6" fill="#f4f4f4" stroke="#50545c" stroke-width="1"/>
<rect x="102" y="418" width="6" height="5" fill="#fff" stroke="#50545c" stroke-width="1"/>
<circle cx="122" cy="416" r="6" fill="#2a62c8" stroke="#1a3c90" stroke-width="1"/>
<text x="122" y="418.9" font-size="8" fill="#fff" text-anchor="middle" font-weight="bold">?</text>
<rect x="73.5" y="433.8" width="852.5" height="99.40000000000003" fill="none" stroke="#e6e6e6" stroke-width="1.5"/>
<line x1="66.5" y1="433.8" x2="73.5" y2="433.8" stroke="#e6e6e6" stroke-width="1.3"/>
<text x="65.5" y="438.5" font-size="10.7" fill="#d8d8d8" text-anchor="end" textLength="29.1" lengthAdjust="spacingAndGlyphs">16.0V</text>
<line x1="66.5" y1="453.68" x2="73.5" y2="453.68" stroke="#e6e6e6" stroke-width="1.3"/>
<text x="65.5" y="458.3" font-size="10.7" fill="#d8d8d8" text-anchor="end" textLength="29.1" lengthAdjust="spacingAndGlyphs">10.8V</text>
<line x1="66.5" y1="473.56" x2="73.5" y2="473.56" stroke="#e6e6e6" stroke-width="1.3"/>
<text x="65.5" y="478.2" font-size="10.7" fill="#d8d8d8" text-anchor="end" textLength="22.9" lengthAdjust="spacingAndGlyphs">5.6V</text>
<line x1="66.5" y1="493.44000000000005" x2="73.5" y2="493.44000000000005" stroke="#e6e6e6" stroke-width="1.3"/>
<text x="65.5" y="498.1" font-size="10.7" fill="#d8d8d8" text-anchor="end" textLength="22.9" lengthAdjust="spacingAndGlyphs">0.4V</text>
<line x1="66.5" y1="513.32" x2="73.5" y2="513.32" stroke="#e6e6e6" stroke-width="1.3"/>
<text x="65.5" y="518.0" font-size="10.7" fill="#d8d8d8" text-anchor="end" textLength="26.6" lengthAdjust="spacingAndGlyphs">-4.8V</text>
<line x1="66.5" y1="533.2" x2="73.5" y2="533.2" stroke="#e6e6e6" stroke-width="1.3"/>
<text x="65.5" y="537.9" font-size="10.7" fill="#d8d8d8" text-anchor="end" textLength="32.8" lengthAdjust="spacingAndGlyphs">-10.0V</text>
<polyline points="73.5,437.0 74.3,437.0 76.5,513.5 132.2,513.5 134.6,437.0 181.6,437.0 183.8,513.5 238.8,513.5 241.2,437.0 288.2,437.0 290.4,513.5 345.4,513.5 347.8,437.0 394.8,437.0 397.0,513.5 452.0,513.5 454.4,437.0 501.4,437.0 503.6,513.5 558.6,513.5 561.0,437.0 608.0,437.0 610.2,513.5 665.2,513.5 667.6,437.0 714.6,437.0 716.8,513.5 771.8,513.5 774.2,437.0 821.2,437.0 823.4,513.5 878.4,513.5 880.8,437.0 926.0,437.0" fill="none" stroke="#2050ff" stroke-width="1.7"/>
<polyline points="73.5,513.5 104.0,513.5 105.5,532.5 106.3,515.0 106.9,485.0 107.5,468.0 108.0,460.8 108.5,455.3 109.0,451.1 109.5,447.8 110.0,445.3 110.5,443.4 111.0,441.9 111.5,440.8 112.0,439.9 112.5,439.2 113.0,438.7 113.5,438.3 114.0,438.0 114.5,437.8 115.0,437.6 115.5,437.5 116.0,437.4 116.5,437.3 117.0,437.2 117.5,437.2 118.0,437.1 118.5,437.1 119.0,437.1 119.5,437.1 120.0,437.0 120.5,437.0 121.0,437.0 121.5,437.0 122.0,437.0 122.5,437.0 123.0,437.0 123.5,437.0 124.0,437.0 124.5,437.0 125.0,437.0 125.5,437.0 126.0,437.0 126.5,437.0 127.0,437.0 155.8,437.0 156.6,455.0 157.4,480.0 158.2,497.0 159.0,506.0 159.8,510.0 160.8,507.0 161.8,499.0 162.6,496.0 163.4,503.0 164.2,510.0 165.8,513.5 210.6,513.5 212.1,532.5 212.9,515.0 213.5,485.0 214.1,468.0 214.6,460.8 215.1,455.3 215.6,451.1 216.1,447.8 216.6,445.3 217.1,443.4 217.6,441.9 218.1,440.8 218.6,439.9 219.1,439.2 219.6,438.7 220.1,438.3 220.6,438.0 221.1,437.8 221.6,437.6 222.1,437.5 222.6,437.4 223.1,437.3 223.6,437.2 224.1,437.2 224.6,437.1 225.1,437.1 225.6,437.1 226.1,437.1 226.6,437.0 227.1,437.0 227.6,437.0 228.1,437.0 228.6,437.0 229.1,437.0 229.6,437.0 230.1,437.0 230.6,437.0 231.1,437.0 231.6,437.0 232.1,437.0 232.6,437.0 233.1,437.0 233.6,437.0 262.4,437.0 263.2,455.0 264.0,480.0 264.8,497.0 265.6,506.0 266.4,510.0 267.4,507.0 268.4,499.0 269.2,496.0 270.0,503.0 270.8,510.0 272.4,513.5 317.2,513.5 318.7,532.5 319.5,515.0 320.1,485.0 320.7,468.0 321.2,460.8 321.7,455.3 322.2,451.1 322.7,447.8 323.2,445.3 323.7,443.4 324.2,441.9 324.7,440.8 325.2,439.9 325.7,439.2 326.2,438.7 326.7,438.3 327.2,438.0 327.7,437.8 328.2,437.6 328.7,437.5 329.2,437.4 329.7,437.3 330.2,437.2 330.7,437.2 331.2,437.1 331.7,437.1 332.2,437.1 332.7,437.1 333.2,437.0 333.7,437.0 334.2,437.0 334.7,437.0 335.2,437.0 335.7,437.0 336.2,437.0 336.7,437.0 337.2,437.0 337.7,437.0 338.2,437.0 338.7,437.0 339.2,437.0 339.7,437.0 340.2,437.0 369.0,437.0 369.8,455.0 370.6,480.0 371.4,497.0 372.2,506.0 373.0,510.0 374.0,507.0 375.0,499.0 375.8,496.0 376.6,503.0 377.4,510.0 379.0,513.5 423.8,513.5 425.3,532.5 426.1,515.0 426.7,485.0 427.3,468.0 427.8,460.8 428.3,455.3 428.8,451.1 429.3,447.8 429.8,445.3 430.3,443.4 430.8,441.9 431.3,440.8 431.8,439.9 432.3,439.2 432.8,438.7 433.3,438.3 433.8,438.0 434.3,437.8 434.8,437.6 435.3,437.5 435.8,437.4 436.3,437.3 436.8,437.2 437.3,437.2 437.8,437.1 438.3,437.1 438.8,437.1 439.3,437.1 439.8,437.0 440.3,437.0 440.8,437.0 441.3,437.0 441.8,437.0 442.3,437.0 442.8,437.0 443.3,437.0 443.8,437.0 444.3,437.0 444.8,437.0 445.3,437.0 445.8,437.0 446.3,437.0 446.8,437.0 475.6,437.0 476.4,455.0 477.2,480.0 478.0,497.0 478.8,506.0 479.6,510.0 480.6,507.0 481.6,499.0 482.4,496.0 483.2,503.0 484.0,510.0 485.6,513.5 530.4,513.5 531.9,532.5 532.7,515.0 533.3,485.0 533.9,468.0 534.4,460.8 534.9,455.3 535.4,451.1 535.9,447.8 536.4,445.3 536.9,443.4 537.4,441.9 537.9,440.8 538.4,439.9 538.9,439.2 539.4,438.7 539.9,438.3 540.4,438.0 540.9,437.8 541.4,437.6 541.9,437.5 542.4,437.4 542.9,437.3 543.4,437.2 543.9,437.2 544.4,437.1 544.9,437.1 545.4,437.1 545.9,437.1 546.4,437.0 546.9,437.0 547.4,437.0 547.9,437.0 548.4,437.0 548.9,437.0 549.4,437.0 549.9,437.0 550.4,437.0 550.9,437.0 551.4,437.0 551.9,437.0 552.4,437.0 552.9,437.0 553.4,437.0 582.2,437.0 583.0,455.0 583.8,480.0 584.6,497.0 585.4,506.0 586.2,510.0 587.2,507.0 588.2,499.0 589.0,496.0 589.8,503.0 590.6,510.0 592.2,513.5 637.0,513.5 638.5,532.5 639.3,515.0 639.9,485.0 640.5,468.0 641.0,460.8 641.5,455.3 642.0,451.1 642.5,447.8 643.0,445.3 643.5,443.4 644.0,441.9 644.5,440.8 645.0,439.9 645.5,439.2 646.0,438.7 646.5,438.3 647.0,438.0 647.5,437.8 648.0,437.6 648.5,437.5 649.0,437.4 649.5,437.3 650.0,437.2 650.5,437.2 651.0,437.1 651.5,437.1 652.0,437.1 652.5,437.1 653.0,437.0 653.5,437.0 654.0,437.0 654.5,437.0 655.0,437.0 655.5,437.0 656.0,437.0 656.5,437.0 657.0,437.0 657.5,437.0 658.0,437.0 658.5,437.0 659.0,437.0 659.5,437.0 660.0,437.0 688.8,437.0 689.6,455.0 690.4,480.0 691.2,497.0 692.0,506.0 692.8,510.0 693.8,507.0 694.8,499.0 695.6,496.0 696.4,503.0 697.2,510.0 698.8,513.5 743.6,513.5 745.1,532.5 745.9,515.0 746.5,485.0 747.1,468.0 747.6,460.8 748.1,455.3 748.6,451.1 749.1,447.8 749.6,445.3 750.1,443.4 750.6,441.9 751.1,440.8 751.6,439.9 752.1,439.2 752.6,438.7 753.1,438.3 753.6,438.0 754.1,437.8 754.6,437.6 755.1,437.5 755.6,437.4 756.1,437.3 756.6,437.2 757.1,437.2 757.6,437.1 758.1,437.1 758.6,437.1 759.1,437.1 759.6,437.0 760.1,437.0 760.6,437.0 761.1,437.0 761.6,437.0 762.1,437.0 762.6,437.0 763.1,437.0 763.6,437.0 764.1,437.0 764.6,437.0 765.1,437.0 765.6,437.0 766.1,437.0 766.6,437.0 795.4,437.0 796.2,455.0 797.0,480.0 797.8,497.0 798.6,506.0 799.4,510.0 800.4,507.0 801.4,499.0 802.2,496.0 803.0,503.0 803.8,510.0 805.4,513.5 850.2,513.5 851.7,532.5 852.5,515.0 853.1,485.0 853.7,468.0 854.2,460.8 854.7,455.3 855.2,451.1 855.7,447.8 856.2,445.3 856.7,443.4 857.2,441.9 857.7,440.8 858.2,439.9 858.7,439.2 859.2,438.7 859.7,438.3 860.2,438.0 860.7,437.8 861.2,437.6 861.7,437.5 862.2,437.4 862.7,437.3 863.2,437.2 863.7,437.2 864.2,437.1 864.7,437.1 865.2,437.1 865.7,437.1 866.2,437.0 866.7,437.0 867.2,437.0 867.7,437.0 868.2,437.0 868.7,437.0 869.2,437.0 869.7,437.0 870.2,437.0 870.7,437.0 871.2,437.0 871.7,437.0 872.2,437.0 872.7,437.0 873.2,437.0 902.0,437.0 902.8,455.0 903.6,480.0 904.4,497.0 905.2,506.0 906.0,510.0 907.0,507.0 908.0,499.0 908.8,496.0 909.6,503.0 910.4,510.0 912.0,513.5 926.0,513.5" fill="none" stroke="#ff5a1e" stroke-width="1.5"/>
<text x="-0.5" y="488.0" font-size="14" font-weight="bold" fill="#ff5a1e" text-anchor="middle" textLength="82" lengthAdjust="spacingAndGlyphs" transform="rotate(-90 -0.5 483)">V(g1s,k1s)</text>
<text x="20" y="488.5" font-size="14" font-weight="bold" fill="#2050ff" text-anchor="middle" textLength="66" lengthAdjust="spacingAndGlyphs" transform="rotate(-90 20 483.5)">V(g1,k1)</text>
<rect x="73.5" y="547.5" width="852.5" height="99.70000000000005" fill="none" stroke="#e6e6e6" stroke-width="1.5"/>
<line x1="66.5" y1="547.5" x2="73.5" y2="547.5" stroke="#e6e6e6" stroke-width="1.3"/>
<text x="65.5" y="552.2" font-size="10.7" fill="#d8d8d8" text-anchor="end" textLength="22.9" lengthAdjust="spacingAndGlyphs">1.0V</text>
<line x1="66.5" y1="567.44" x2="73.5" y2="567.44" stroke="#e6e6e6" stroke-width="1.3"/>
<text x="65.5" y="572.1" font-size="10.7" fill="#d8d8d8" text-anchor="end" textLength="22.9" lengthAdjust="spacingAndGlyphs">0.8V</text>
<line x1="66.5" y1="587.38" x2="73.5" y2="587.38" stroke="#e6e6e6" stroke-width="1.3"/>
<text x="65.5" y="592.0" font-size="10.7" fill="#d8d8d8" text-anchor="end" textLength="22.9" lengthAdjust="spacingAndGlyphs">0.6V</text>
<line x1="66.5" y1="607.32" x2="73.5" y2="607.32" stroke="#e6e6e6" stroke-width="1.3"/>
<text x="65.5" y="612.0" font-size="10.7" fill="#d8d8d8" text-anchor="end" textLength="22.9" lengthAdjust="spacingAndGlyphs">0.4V</text>
<line x1="66.5" y1="627.26" x2="73.5" y2="627.26" stroke="#e6e6e6" stroke-width="1.3"/>
<text x="65.5" y="631.9" font-size="10.7" fill="#d8d8d8" text-anchor="end" textLength="22.9" lengthAdjust="spacingAndGlyphs">0.2V</text>
<line x1="66.5" y1="647.2" x2="73.5" y2="647.2" stroke="#e6e6e6" stroke-width="1.3"/>
<text x="65.5" y="651.9" font-size="10.7" fill="#d8d8d8" text-anchor="end" textLength="22.9" lengthAdjust="spacingAndGlyphs">0.0V</text>
<polyline points="73.5,647.2 106.5,647.2 107.1,547.5 155.7,547.5 156.3,647.2 213.1,647.2 213.7,547.5 262.3,547.5 262.9,647.2 319.7,647.2 320.3,547.5 368.9,547.5 369.5,647.2 426.3,647.2 426.9,547.5 475.5,547.5 476.1,647.2 532.9,647.2 533.5,547.5 582.1,547.5 582.7,647.2 639.5,647.2 640.1,547.5 688.7,547.5 689.3,647.2 746.1,647.2 746.7,547.5 795.3,547.5 795.9,647.2 852.7,647.2 853.3,547.5 901.9,547.5 902.5,647.2 926.0,647.2" fill="none" stroke="#ff5a1e" stroke-width="1.5"/>
<polyline points="73.5,547.5 75.0,547.5 75.8,647.2 133.0,647.2 133.8,547.5 181.6,547.5 182.4,647.2 239.6,647.2 240.4,547.5 288.2,547.5 289.0,647.2 346.2,647.2 347.0,547.5 394.8,547.5 395.6,647.2 452.8,647.2 453.6,547.5 501.4,547.5 502.2,647.2 559.4,647.2 560.2,547.5 608.0,547.5 608.8,647.2 666.0,647.2 666.8,547.5 714.6,547.5 715.4,647.2 772.6,647.2 773.4,547.5 821.2,547.5 822.0,647.2 879.2,647.2 880.0,547.5 926.0,547.5" fill="none" stroke="#2050ff" stroke-width="1.7"/>
<text x="10.5" y="603.0" font-size="14" font-weight="bold" fill="#ff5a1e" text-anchor="middle" textLength="65" lengthAdjust="spacingAndGlyphs" transform="rotate(-90 10.5 598)">V(outas)</text>
<rect x="19.6" y="567.4" width="20.199999999999996" height="60.0" fill="#1a55f0"/>
<text x="30" y="603.0" font-size="14" font-weight="bold" fill="#10185a" text-anchor="middle" textLength="56" lengthAdjust="spacingAndGlyphs" transform="rotate(-90 30 598)">V(outa)</text>
<rect x="73.5" y="661.2" width="852.5" height="100.59999999999991" fill="none" stroke="#e6e6e6" stroke-width="1.5"/>
<line x1="66.5" y1="661.2" x2="73.5" y2="661.2" stroke="#e6e6e6" stroke-width="1.3"/>
<text x="65.5" y="665.9" font-size="10.7" fill="#d8d8d8" text-anchor="end" textLength="29.1" lengthAdjust="spacingAndGlyphs">1.10V</text>
<line x1="66.5" y1="681.32" x2="73.5" y2="681.32" stroke="#e6e6e6" stroke-width="1.3"/>
<text x="65.5" y="686.0" font-size="10.7" fill="#d8d8d8" text-anchor="end" textLength="29.1" lengthAdjust="spacingAndGlyphs">1.06V</text>
<line x1="66.5" y1="701.44" x2="73.5" y2="701.44" stroke="#e6e6e6" stroke-width="1.3"/>
<text x="65.5" y="706.1" font-size="10.7" fill="#d8d8d8" text-anchor="end" textLength="29.1" lengthAdjust="spacingAndGlyphs">1.02V</text>
<line x1="66.5" y1="721.56" x2="73.5" y2="721.56" stroke="#e6e6e6" stroke-width="1.3"/>
<text x="65.5" y="726.2" font-size="10.7" fill="#d8d8d8" text-anchor="end" textLength="29.1" lengthAdjust="spacingAndGlyphs">0.98V</text>
<line x1="66.5" y1="741.68" x2="73.5" y2="741.68" stroke="#e6e6e6" stroke-width="1.3"/>
<text x="65.5" y="746.3" font-size="10.7" fill="#d8d8d8" text-anchor="end" textLength="29.1" lengthAdjust="spacingAndGlyphs">0.94V</text>
<line x1="66.5" y1="761.8" x2="73.5" y2="761.8" stroke="#e6e6e6" stroke-width="1.3"/>
<text x="65.5" y="766.5" font-size="10.7" fill="#d8d8d8" text-anchor="end" textLength="29.1" lengthAdjust="spacingAndGlyphs">0.90V</text>
<line x1="73.5" y1="711" x2="926" y2="711" stroke="#20e020" stroke-width="1.6"/>
<rect x="12.7" y="688" width="19.7" height="48" fill="#22e022"/>
<text x="22.5" y="717.0" font-size="14" font-weight="bold" fill="#0a3a0a" text-anchor="middle" textLength="42" lengthAdjust="spacingAndGlyphs" transform="rotate(-90 22.5 712)">V(phi)</text>
<rect x="73.5" y="776" width="852.5" height="99" fill="none" stroke="#e6e6e6" stroke-width="1.5"/>
<line x1="66.5" y1="776.0" x2="73.5" y2="776.0" stroke="#e6e6e6" stroke-width="1.3"/>
<text x="65.5" y="780.7" font-size="10.7" fill="#d8d8d8" text-anchor="end" textLength="26.0" lengthAdjust="spacingAndGlyphs">760V</text>
<line x1="66.5" y1="795.8" x2="73.5" y2="795.8" stroke="#e6e6e6" stroke-width="1.3"/>
<text x="65.5" y="800.5" font-size="10.7" fill="#d8d8d8" text-anchor="end" textLength="26.0" lengthAdjust="spacingAndGlyphs">740V</text>
<line x1="66.5" y1="815.6" x2="73.5" y2="815.6" stroke="#e6e6e6" stroke-width="1.3"/>
<text x="65.5" y="820.3" font-size="10.7" fill="#d8d8d8" text-anchor="end" textLength="26.0" lengthAdjust="spacingAndGlyphs">720V</text>
<line x1="66.5" y1="835.4" x2="73.5" y2="835.4" stroke="#e6e6e6" stroke-width="1.3"/>
<text x="65.5" y="840.1" font-size="10.7" fill="#d8d8d8" text-anchor="end" textLength="26.0" lengthAdjust="spacingAndGlyphs">700V</text>
<line x1="66.5" y1="855.2" x2="73.5" y2="855.2" stroke="#e6e6e6" stroke-width="1.3"/>
<text x="65.5" y="859.9" font-size="10.7" fill="#d8d8d8" text-anchor="end" textLength="26.0" lengthAdjust="spacingAndGlyphs">680V</text>
<line x1="66.5" y1="875.0" x2="73.5" y2="875.0" stroke="#e6e6e6" stroke-width="1.3"/>
<text x="65.5" y="879.7" font-size="10.7" fill="#d8d8d8" text-anchor="end" textLength="26.0" lengthAdjust="spacingAndGlyphs">660V</text>
<line x1="73.5" y1="785" x2="926" y2="785" stroke="#20e020" stroke-width="1.8"/>
<line x1="73.5" y1="865.8" x2="926" y2="867" stroke="#ff5a1e" stroke-width="1.8"/>
<text x="8" y="831.0" font-size="14" font-weight="bold" fill="#20e020" text-anchor="middle" textLength="73" lengthAdjust="spacingAndGlyphs" transform="rotate(-90 8 826)">V(vo_ref)</text>
<rect x="17" y="796" width="19.6" height="59.5" fill="#ff5a1e"/>
<text x="27" y="830.5" font-size="14" font-weight="bold" fill="#301008" text-anchor="middle" textLength="52" lengthAdjust="spacingAndGlyphs" transform="rotate(-90 27 825.5)">V(vout)</text>
<line x1="73.5" y1="875" x2="73.5" y2="880" stroke="#e6e6e6" stroke-width="1.3"/>
<text x="73.5" y="891.6" font-size="10.1" fill="#d8d8d8" text-anchor="middle" textLength="36.4" lengthAdjust="spacingAndGlyphs">2.66ms</text>
<line x1="286.63" y1="875" x2="286.63" y2="880" stroke="#e6e6e6" stroke-width="1.3"/>
<text x="286.63" y="891.6" font-size="10.1" fill="#d8d8d8" text-anchor="middle" textLength="36.4" lengthAdjust="spacingAndGlyphs">2.68ms</text>
<line x1="499.76" y1="875" x2="499.76" y2="880" stroke="#e6e6e6" stroke-width="1.3"/>
<text x="499.76" y="891.6" font-size="10.1" fill="#d8d8d8" text-anchor="middle" textLength="36.4" lengthAdjust="spacingAndGlyphs">2.70ms</text>
<line x1="712.89" y1="875" x2="712.89" y2="880" stroke="#e6e6e6" stroke-width="1.3"/>
<text x="712.89" y="891.6" font-size="10.1" fill="#d8d8d8" text-anchor="middle" textLength="36.4" lengthAdjust="spacingAndGlyphs">2.72ms</text>
<line x1="926.02" y1="875" x2="926.02" y2="880" stroke="#e6e6e6" stroke-width="1.3"/>
<text x="926.02" y="891.6" font-size="10.1" fill="#d8d8d8" text-anchor="middle" textLength="36.4" lengthAdjust="spacingAndGlyphs">2.74ms</text>
<rect x="955" y="368" width="965" height="24" fill="#ffffff"/>
<rect x="955" y="392" width="965" height="18" fill="#eceef9"/>
<rect x="955" y="410" width="965" height="17" fill="url(#tb)"/>
<rect x="955" y="427" width="965" height="457" fill="#000"/>
<rect x="955" y="884" width="965" height="7" fill="#eef0f4"/>
<line x1="955.5" y1="368" x2="955.5" y2="891" stroke="#7890a0" stroke-width="1"/>
<circle cx="967" cy="380" r="6" fill="#1478b8"/>
<circle cx="967" cy="380" r="3.4" fill="#fff"/>
<circle cx="967" cy="380" r="1.8" fill="#333"/>
<text x="975" y="384.0" font-size="9.6" fill="#9a9a9a" textLength="164.0" lengthAdjust="spacingAndGlyphs">Qorvo QSPICE® - DAB_control_test.qraw</text>
<line x1="1830" y1="380.5" x2="1840" y2="380.5" stroke="#b8b8b8" stroke-width="1"/>
<rect x="1865" y="375.5" width="8" height="9.5" fill="none" stroke="#b8b8b8" stroke-width="1"/>
<line x1="1900" y1="375.5" x2="1910" y2="385.5" stroke="#b8b8b8" stroke-width="1"/>
<line x1="1910" y1="375.5" x2="1900" y2="385.5" stroke="#b8b8b8" stroke-width="1"/>
<text x="963" y="403.2" font-size="9" fill="#1a1a2a" textLength="13.5" lengthAdjust="spacingAndGlyphs">File</text>
<text x="984" y="403.2" font-size="9" fill="#1a1a2a" textLength="14.0" lengthAdjust="spacingAndGlyphs">Edit</text>
<text x="1005.7" y="403.2" font-size="9" fill="#1a1a2a" textLength="18.5" lengthAdjust="spacingAndGlyphs">View</text>
<text x="1031.6" y="403.2" font-size="9" fill="#1a1a2a" textLength="17.8" lengthAdjust="spacingAndGlyphs">Help</text>
<path d="M964,411 h6 l3,3 v9 h-9 z" fill="#fff" stroke="#8890a0" stroke-width="1"/>
<path d="M978,414 h5 l1,-2 h6 v8 h-12 z" fill="#f0c040" stroke="#b08020" stroke-width="1"/>
<rect x="996" y="411" width="11" height="12" fill="#4a52b4"/>
<rect x="998" y="411" width="7" height="4.5" fill="#f0f0fa"/>
<rect x="999" y="419" width="4" height="3" fill="#fff"/>
<line x1="1012" y1="410" x2="1012" y2="424" stroke="#c8cad4" stroke-width="1"/>
<path d="M1019,410 L1024,420 M1025,410 L1020,420" stroke="#a8b4cc" stroke-width="1.2"/>
<circle cx="1019" cy="421" r="1.8" fill="none" stroke="#a8b4cc" stroke-width="1"/>
<circle cx="1025" cy="421" r="1.8" fill="none" stroke="#a8b4cc" stroke-width="1"/>
<rect x="1032" y="411" width="8" height="9" fill="#e8ecf8" stroke="#b8c4dc" stroke-width="1"/>
<rect x="1036" y="415" width="8" height="9" fill="#e4eaf8" stroke="#b0bcd8" stroke-width="1"/>
<rect x="1049" y="411" width="10" height="12" fill="#eee0a8" stroke="#c8b880" stroke-width="1"/>
<rect x="1054" y="416" width="7" height="8" fill="#f2f4fa" stroke="#b8c0d0" stroke-width="1"/>
<line x1="1065" y1="410" x2="1065" y2="424" stroke="#c8cad4" stroke-width="1"/>
<path d="M1069,415 h12 v6 h-12 z" fill="#50545c"/>
<rect x="1071.5" y="410" width="7" height="6" fill="#f4f4f4" stroke="#50545c" stroke-width="1"/>
<rect x="1072" y="419" width="6" height="5" fill="#fff" stroke="#50545c" stroke-width="1"/>
<circle cx="1092" cy="417" r="6" fill="#2a62c8" stroke="#1a3c90" stroke-width="1"/>
<text x="1092" y="419.9" font-size="8" fill="#fff" text-anchor="middle" font-weight="bold">?</text>
<rect x="1033" y="434" width="863" height="133.29999999999995" fill="none" stroke="#e6e6e6" stroke-width="1.5"/>
<line x1="1025" y1="434.0" x2="1033" y2="434.0" stroke="#e6e6e6" stroke-width="1.3"/>
<text x="1024.5" y="438.7" font-size="10.7" fill="#d8d8d8" text-anchor="end" textLength="22.9" lengthAdjust="spacingAndGlyphs">1.0V</text>
<line x1="1025" y1="460.65999999999997" x2="1033" y2="460.65999999999997" stroke="#e6e6e6" stroke-width="1.3"/>
<text x="1024.5" y="465.3" font-size="10.7" fill="#d8d8d8" text-anchor="end" textLength="22.9" lengthAdjust="spacingAndGlyphs">0.8V</text>
<line x1="1025" y1="487.32" x2="1033" y2="487.32" stroke="#e6e6e6" stroke-width="1.3"/>
<text x="1024.5" y="492.0" font-size="10.7" fill="#d8d8d8" text-anchor="end" textLength="22.9" lengthAdjust="spacingAndGlyphs">0.6V</text>
<line x1="1025" y1="513.98" x2="1033" y2="513.98" stroke="#e6e6e6" stroke-width="1.3"/>
<text x="1024.5" y="518.6" font-size="10.7" fill="#d8d8d8" text-anchor="end" textLength="22.9" lengthAdjust="spacingAndGlyphs">0.4V</text>
<line x1="1025" y1="540.64" x2="1033" y2="540.64" stroke="#e6e6e6" stroke-width="1.3"/>
<text x="1024.5" y="545.3" font-size="10.7" fill="#d8d8d8" text-anchor="end" textLength="22.9" lengthAdjust="spacingAndGlyphs">0.2V</text>
<line x1="1025" y1="567.3" x2="1033" y2="567.3" stroke="#e6e6e6" stroke-width="1.3"/>
<text x="1024.5" y="572.0" font-size="10.7" fill="#d8d8d8" text-anchor="end" textLength="22.9" lengthAdjust="spacingAndGlyphs">0.0V</text>
<polyline points="1033.0,567.3 1174.7,567.3 1176.7,434.0 1313.4,434.0 1315.4,567.3 1483.0,567.3 1485.0,434.0 1621.0,434.0 1623.0,567.3 1791.0,567.3 1793.0,434.0 1896.0,434.0" fill="none" stroke="#2050ff" stroke-width="1.5"/>
<polyline points="1033.0,434.0 1085.2,434.0 1085.8,567.3 1254.5,567.3 1255.1,434.0 1393.2,434.0 1393.8,567.3 1562.7,567.3 1563.3,434.0 1700.7,434.0 1701.3,567.3 1870.7,567.3 1871.3,434.0 1896.0,434.0" fill="none" stroke="#ff5a1e" stroke-width="1.5"/>
<line x1="957" y1="574" x2="1920" y2="574" stroke="#6a6a6a" stroke-width="1.2" stroke-dasharray="5,5"/>
<text x="971" y="505.5" font-size="14" font-weight="bold" fill="#ff5a1e" text-anchor="middle" textLength="66" lengthAdjust="spacingAndGlyphs" transform="rotate(-90 971 500.5)">V(outas)</text>
<text x="989.5" y="506.5" font-size="14" font-weight="bold" fill="#2050ff" text-anchor="middle" textLength="57" lengthAdjust="spacingAndGlyphs" transform="rotate(-90 989.5 501.5)">V(outa)</text>
<rect x="1033" y="581.7" width="863" height="133.5999999999999" fill="none" stroke="#e6e6e6" stroke-width="1.5"/>
<line x1="1025" y1="581.7" x2="1033" y2="581.7" stroke="#e6e6e6" stroke-width="1.3"/>
<text x="1024.5" y="586.4" font-size="10.7" fill="#d8d8d8" text-anchor="end" textLength="29.1" lengthAdjust="spacingAndGlyphs">1.10V</text>
<line x1="1025" y1="608.4200000000001" x2="1033" y2="608.4200000000001" stroke="#e6e6e6" stroke-width="1.3"/>
<text x="1024.5" y="613.1" font-size="10.7" fill="#d8d8d8" text-anchor="end" textLength="29.1" lengthAdjust="spacingAndGlyphs">1.06V</text>
<line x1="1025" y1="635.14" x2="1033" y2="635.14" stroke="#e6e6e6" stroke-width="1.3"/>
<text x="1024.5" y="639.8" font-size="10.7" fill="#d8d8d8" text-anchor="end" textLength="29.1" lengthAdjust="spacingAndGlyphs">1.02V</text>
<line x1="1025" y1="661.86" x2="1033" y2="661.86" stroke="#e6e6e6" stroke-width="1.3"/>
<text x="1024.5" y="666.5" font-size="10.7" fill="#d8d8d8" text-anchor="end" textLength="29.1" lengthAdjust="spacingAndGlyphs">0.98V</text>
<line x1="1025" y1="688.5799999999999" x2="1033" y2="688.5799999999999" stroke="#e6e6e6" stroke-width="1.3"/>
<text x="1024.5" y="693.2" font-size="10.7" fill="#d8d8d8" text-anchor="end" textLength="29.1" lengthAdjust="spacingAndGlyphs">0.94V</text>
<line x1="1025" y1="715.3" x2="1033" y2="715.3" stroke="#e6e6e6" stroke-width="1.3"/>
<text x="1024.5" y="720.0" font-size="10.7" fill="#d8d8d8" text-anchor="end" textLength="29.1" lengthAdjust="spacingAndGlyphs">0.90V</text>
<line x1="1033" y1="648.3" x2="1896" y2="648.3" stroke="#20e020" stroke-width="1.6"/>
<line x1="957" y1="721.5" x2="1920" y2="721.5" stroke="#6a6a6a" stroke-width="1.2" stroke-dasharray="5,5"/>
<line x1="957.5" y1="574" x2="957.5" y2="884" stroke="#6a6a6a" stroke-width="1.2" stroke-dasharray="5,5"/>
<text x="983.5" y="654.5" font-size="14" font-weight="bold" fill="#20e020" text-anchor="middle" textLength="47" lengthAdjust="spacingAndGlyphs" transform="rotate(-90 983.5 649.5)">V(phi)</text>
<rect x="1033" y="730" width="863" height="133" fill="none" stroke="#e6e6e6" stroke-width="1.5"/>
<line x1="1033" y1="748.2" x2="1896" y2="748.2" stroke="#1838d0" stroke-width="2"/>
<line x1="1025" y1="738.6" x2="1033" y2="738.6" stroke="#e6e6e6" stroke-width="1.3"/>
<text x="1024.5" y="743.3" font-size="10.7" fill="#d8d8d8" text-anchor="end" textLength="27.2" lengthAdjust="spacingAndGlyphs">14KV</text>
<line x1="1025" y1="756.3714285714286" x2="1033" y2="756.3714285714286" stroke="#e6e6e6" stroke-width="1.3"/>
<text x="1024.5" y="761.0" font-size="10.7" fill="#d8d8d8" text-anchor="end" textLength="27.2" lengthAdjust="spacingAndGlyphs">10KV</text>
<line x1="1025" y1="774.1428571428571" x2="1033" y2="774.1428571428571" stroke="#e6e6e6" stroke-width="1.3"/>
<text x="1024.5" y="778.8" font-size="10.7" fill="#d8d8d8" text-anchor="end" textLength="21.0" lengthAdjust="spacingAndGlyphs">6KV</text>
<line x1="1025" y1="791.9142857142857" x2="1033" y2="791.9142857142857" stroke="#e6e6e6" stroke-width="1.3"/>
<text x="1024.5" y="796.6" font-size="10.7" fill="#d8d8d8" text-anchor="end" textLength="21.0" lengthAdjust="spacingAndGlyphs">2KV</text>
<line x1="1025" y1="809.6857142857143" x2="1033" y2="809.6857142857143" stroke="#e6e6e6" stroke-width="1.3"/>
<text x="1024.5" y="814.3" font-size="10.7" fill="#d8d8d8" text-anchor="end" textLength="24.7" lengthAdjust="spacingAndGlyphs">-2KV</text>
<line x1="1025" y1="827.4571428571429" x2="1033" y2="827.4571428571429" stroke="#e6e6e6" stroke-width="1.3"/>
<text x="1024.5" y="832.1" font-size="10.7" fill="#d8d8d8" text-anchor="end" textLength="24.7" lengthAdjust="spacingAndGlyphs">-6KV</text>
<line x1="1025" y1="845.2285714285714" x2="1033" y2="845.2285714285714" stroke="#e6e6e6" stroke-width="1.3"/>
<text x="1024.5" y="849.9" font-size="10.7" fill="#d8d8d8" text-anchor="end" textLength="30.9" lengthAdjust="spacingAndGlyphs">-10KV</text>
<line x1="1025" y1="863.0" x2="1033" y2="863.0" stroke="#e6e6e6" stroke-width="1.3"/>
<text x="1024.5" y="867.7" font-size="10.7" fill="#d8d8d8" text-anchor="end" textLength="30.9" lengthAdjust="spacingAndGlyphs">-14KV</text>
<text x="983" y="801.0" font-size="14" font-weight="bold" fill="#2050ff" text-anchor="middle" textLength="56" lengthAdjust="spacingAndGlyphs" transform="rotate(-90 983 796)">V(pref)</text>
<line x1="1033.0" y1="863" x2="1033.0" y2="868" stroke="#e6e6e6" stroke-width="1.3"/>
<text x="1033.0" y="879.8" font-size="10.5" fill="#d8d8d8" text-anchor="middle" textLength="43.5" lengthAdjust="spacingAndGlyphs">2.106ms</text>
<line x1="1094.642857142857" y1="863" x2="1094.642857142857" y2="868" stroke="#e6e6e6" stroke-width="1.3"/>
<text x="1094.642857142857" y="879.8" font-size="10.5" fill="#d8d8d8" text-anchor="middle" textLength="43.5" lengthAdjust="spacingAndGlyphs">2.108ms</text>
<line x1="1156.2857142857142" y1="863" x2="1156.2857142857142" y2="868" stroke="#e6e6e6" stroke-width="1.3"/>
<text x="1156.2857142857142" y="879.8" font-size="10.5" fill="#d8d8d8" text-anchor="middle" textLength="42.7" lengthAdjust="spacingAndGlyphs">2.110ms</text>
<line x1="1217.9285714285713" y1="863" x2="1217.9285714285713" y2="868" stroke="#e6e6e6" stroke-width="1.3"/>
<text x="1217.9285714285713" y="879.8" font-size="10.5" fill="#d8d8d8" text-anchor="middle" textLength="42.7" lengthAdjust="spacingAndGlyphs">2.112ms</text>
<line x1="1279.5714285714287" y1="863" x2="1279.5714285714287" y2="868" stroke="#e6e6e6" stroke-width="1.3"/>
<text x="1279.5714285714287" y="879.8" font-size="10.5" fill="#d8d8d8" text-anchor="middle" textLength="42.7" lengthAdjust="spacingAndGlyphs">2.114ms</text>
<line x1="1341.2142857142858" y1="863" x2="1341.2142857142858" y2="868" stroke="#e6e6e6" stroke-width="1.3"/>
<text x="1341.2142857142858" y="879.8" font-size="10.5" fill="#d8d8d8" text-anchor="middle" textLength="42.7" lengthAdjust="spacingAndGlyphs">2.116ms</text>
<line x1="1402.857142857143" y1="863" x2="1402.857142857143" y2="868" stroke="#e6e6e6" stroke-width="1.3"/>
<text x="1402.857142857143" y="879.8" font-size="10.5" fill="#d8d8d8" text-anchor="middle" textLength="42.7" lengthAdjust="spacingAndGlyphs">2.118ms</text>
<line x1="1464.5" y1="863" x2="1464.5" y2="868" stroke="#e6e6e6" stroke-width="1.3"/>
<text x="1464.5" y="879.8" font-size="10.5" fill="#d8d8d8" text-anchor="middle" textLength="43.5" lengthAdjust="spacingAndGlyphs">2.120ms</text>
<line x1="1526.142857142857" y1="863" x2="1526.142857142857" y2="868" stroke="#e6e6e6" stroke-width="1.3"/>
<text x="1526.142857142857" y="879.8" font-size="10.5" fill="#d8d8d8" text-anchor="middle" textLength="43.5" lengthAdjust="spacingAndGlyphs">2.122ms</text>
<line x1="1587.7857142857142" y1="863" x2="1587.7857142857142" y2="868" stroke="#e6e6e6" stroke-width="1.3"/>
<text x="1587.7857142857142" y="879.8" font-size="10.5" fill="#d8d8d8" text-anchor="middle" textLength="43.5" lengthAdjust="spacingAndGlyphs">2.124ms</text>
<line x1="1649.4285714285716" y1="863" x2="1649.4285714285716" y2="868" stroke="#e6e6e6" stroke-width="1.3"/>
<text x="1649.4285714285716" y="879.8" font-size="10.5" fill="#d8d8d8" text-anchor="middle" textLength="43.5" lengthAdjust="spacingAndGlyphs">2.126ms</text>
<line x1="1711.0714285714284" y1="863" x2="1711.0714285714284" y2="868" stroke="#e6e6e6" stroke-width="1.3"/>
<text x="1711.0714285714284" y="879.8" font-size="10.5" fill="#d8d8d8" text-anchor="middle" textLength="43.5" lengthAdjust="spacingAndGlyphs">2.128ms</text>
<line x1="1772.7142857142858" y1="863" x2="1772.7142857142858" y2="868" stroke="#e6e6e6" stroke-width="1.3"/>
<text x="1772.7142857142858" y="879.8" font-size="10.5" fill="#d8d8d8" text-anchor="middle" textLength="43.5" lengthAdjust="spacingAndGlyphs">2.130ms</text>
<line x1="1834.357142857143" y1="863" x2="1834.357142857143" y2="868" stroke="#e6e6e6" stroke-width="1.3"/>
<text x="1834.357142857143" y="879.8" font-size="10.5" fill="#d8d8d8" text-anchor="middle" textLength="43.5" lengthAdjust="spacingAndGlyphs">2.132ms</text>
<line x1="1896.0" y1="863" x2="1896.0" y2="868" stroke="#e6e6e6" stroke-width="1.3"/>
<text x="1896.0" y="879.8" font-size="10.5" fill="#d8d8d8" text-anchor="middle" textLength="43.5" lengthAdjust="spacingAndGlyphs">2.134ms</text>
</svg></body></html>
